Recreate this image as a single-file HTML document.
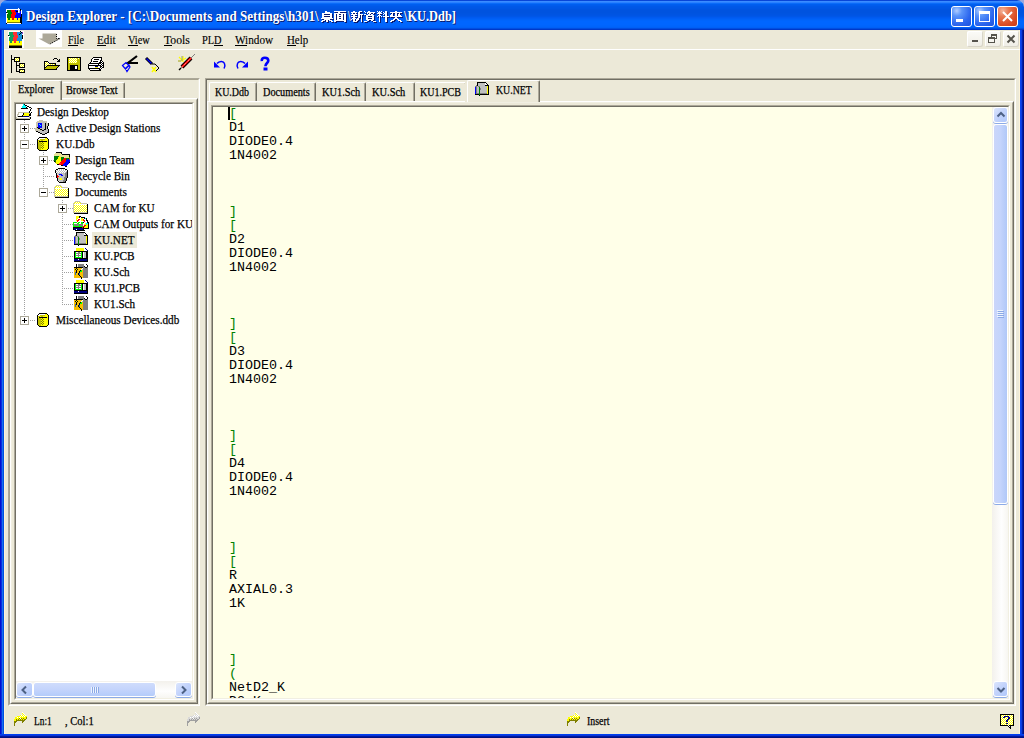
<!DOCTYPE html><html><head><meta charset="utf-8"><style>
*{margin:0;padding:0;box-sizing:border-box}
html,body{width:1024px;height:738px;overflow:hidden;background:#9aa6dc}
body{position:relative;font-family:"Liberation Serif",serif;font-size:12px;color:#000}
.a{position:absolute}
svg.a{overflow:visible}
.t{position:absolute;white-space:nowrap;line-height:14px}
.sunk{position:absolute;border-style:solid;border-width:1px;border-color:#aca899 #fff #fff #aca899}
.sunk>.in{position:absolute;left:0;top:0;right:0;bottom:0;border-style:solid;border-width:1px;border-color:#716f64 #f1efe2 #f1efe2 #716f64}
.rais{position:absolute;border-style:solid;border-width:1px;border-color:#fff #716f64 #716f64 #fff}
.rais>.in{position:absolute;left:0;top:0;right:0;bottom:0;border-style:solid;border-width:1px;border-color:#f1efe2 #aca899 #aca899 #f1efe2}
.code{position:absolute;font-family:"Liberation Mono",monospace;font-size:13.333px;line-height:14px;white-space:pre;color:#000}
.g{color:#008000}
u{text-decoration:none;border-bottom:1px solid #000}
.tab{position:absolute;background:#ece9d8;border-top:1px solid #fff;border-left:1px solid #fff;border-right:1px solid #716f64;box-shadow:inset -1px 0 0 #aca899;border-radius:2px 2px 0 0}
.tt{position:absolute;white-space:nowrap;line-height:12px;font-size:11px;letter-spacing:-0.3px}
.tr{position:absolute;white-space:nowrap;line-height:14px;font-size:12px;letter-spacing:-0.32px}
.sbtn{position:absolute;border:1px solid #fff;border-radius:3px;background:linear-gradient(135deg,#dce6fd 0%,#c4d4fc 45%,#b0c8fb 100%);box-shadow:0 1px 0 #8caae6}
</style></head><body><div class="a" style="left:0;top:0;width:1024px;height:738px;background:#ece9d8;border-radius:7px 7px 0 0"></div><div class="a" style="left:4px;top:30px;width:1px;height:704px;background:#fdf3d8"></div><div class="a" style="left:1019px;top:30px;width:1px;height:704px;background:#fdf3d8"></div><div class="a" style="left:0;top:0;width:1024px;height:30px;background:linear-gradient(to bottom,#0846d8 0px,#0846d8 1px,#3a8cff 1px,#3a8cff 2px,#2a80ff 2px,#2a80ff 3px,#0a6cf8 3px,#0a6cf8 4px,#005ef0 4px,#005ef0 5px,#005cec 5px,#005cec 6px,#0058e8 6px,#0058e8 7px,#0057e6 7px,#0057e6 8px,#0056e4 8px,#0056e4 9px,#0054e0 9px,#0054e0 10px,#0053df 10px,#0053df 11px,#0053df 11px,#0053df 12px,#0053df 12px,#0053df 13px,#0054e0 13px,#0054e0 14px,#0054e2 14px,#0054e2 15px,#0055e4 15px,#0055e4 16px,#0057e8 16px,#0057e8 17px,#005af0 17px,#005af0 18px,#005ef4 18px,#005ef4 19px,#0062f8 19px,#0062f8 20px,#0065fc 20px,#0065fc 21px,#0066ff 21px,#0066ff 22px,#0066ff 22px,#0066ff 23px,#0066ff 23px,#0066ff 24px,#0066ff 24px,#0066ff 25px,#0065fd 25px,#0065fd 26px,#0064fb 26px,#0064fb 27px,#0060f6 27px,#0060f6 28px,#004ee0 28px,#004ee0 29px,#0038c8 29px,#0038c8 30px);border-radius:7px 7px 0 0"></div><div class="a" style="left:0;top:30px;width:4px;height:708px;background:linear-gradient(to right,#0010d0 0px,#0010d0 1px,#0a30e0 1px,#0a30e0 2px,#1670f0 2px,#1670f0 3px,#0050e0 3px,#0050e0 4px)"></div><div class="a" style="left:1020px;top:30px;width:4px;height:708px;background:linear-gradient(to right,#0844f0 0px,#0844f0 1px,#0a3ce0 1px,#0a3ce0 2px,#0020a8 2px,#0020a8 3px,#001080 3px,#001080 4px)"></div><div class="a" style="left:0;top:734px;width:1024px;height:4px;background:linear-gradient(to bottom,#0040f0 0px,#0040f0 1px,#0a34d8 1px,#0a34d8 2px,#0018a0 2px,#0018a0 3px,#001080 3px)"></div><svg class="a" style="left:6px;top:8px;" width="16" height="16" viewBox="0 0 16 16" shape-rendering="crispEdges"><rect x="12" y="0" width="1" height="1" fill="#ffffff"/><rect x="0" y="1" width="14" height="1" fill="#ffffff"/><rect x="14" y="1" width="1" height="1" fill="#000000"/><rect x="0" y="2" width="1" height="1" fill="#ffffff"/><rect x="1" y="2" width="4" height="1" fill="#008000"/><rect x="5" y="2" width="4" height="1" fill="#ff0000"/><rect x="9" y="2" width="3" height="1" fill="#0000ff"/><rect x="12" y="2" width="1" height="1" fill="#ffffff"/><rect x="13" y="2" width="1" height="1" fill="#c0c0c0"/><rect x="14" y="2" width="1" height="1" fill="#000000"/><rect x="15" y="2" width="1" height="1" fill="#ffffff"/><rect x="0" y="3" width="1" height="1" fill="#ffffff"/><rect x="1" y="3" width="4" height="1" fill="#008000"/><rect x="5" y="3" width="4" height="1" fill="#ff0000"/><rect x="9" y="3" width="1" height="1" fill="#0000ff"/><rect x="10" y="3" width="2" height="1" fill="#000000"/><rect x="12" y="3" width="1" height="1" fill="#ffffff"/><rect x="13" y="3" width="1" height="1" fill="#c0c0c0"/><rect x="14" y="3" width="1" height="1" fill="#0000ff"/><rect x="15" y="3" width="1" height="1" fill="#ffffff"/><rect x="0" y="4" width="1" height="1" fill="#000000"/><rect x="1" y="4" width="5" height="1" fill="#008000"/><rect x="6" y="4" width="4" height="1" fill="#ff0000"/><rect x="10" y="4" width="2" height="1" fill="#0000ff"/><rect x="12" y="4" width="1" height="1" fill="#ffffff"/><rect x="13" y="4" width="1" height="1" fill="#c0c0c0"/><rect x="14" y="4" width="1" height="1" fill="#0000ff"/><rect x="15" y="4" width="1" height="1" fill="#ffffff"/><rect x="0" y="5" width="2" height="1" fill="#ffffff"/><rect x="2" y="5" width="4" height="1" fill="#008000"/><rect x="6" y="5" width="4" height="1" fill="#ff0000"/><rect x="10" y="5" width="5" height="1" fill="#0000ff"/><rect x="15" y="5" width="1" height="1" fill="#ffffff"/><rect x="0" y="6" width="1" height="1" fill="#ffffff"/><rect x="1" y="6" width="4" height="1" fill="#008000"/><rect x="5" y="6" width="5" height="1" fill="#ff0000"/><rect x="10" y="6" width="5" height="1" fill="#0000ff"/><rect x="15" y="6" width="1" height="1" fill="#000000"/><rect x="0" y="7" width="1" height="1" fill="#ffffff"/><rect x="1" y="7" width="4" height="1" fill="#008000"/><rect x="5" y="7" width="4" height="1" fill="#ff0000"/><rect x="9" y="7" width="6" height="1" fill="#0000ff"/><rect x="15" y="7" width="1" height="1" fill="#000000"/><rect x="0" y="8" width="1" height="1" fill="#ffffff"/><rect x="1" y="8" width="4" height="1" fill="#008000"/><rect x="5" y="8" width="4" height="1" fill="#ff0000"/><rect x="9" y="8" width="6" height="1" fill="#0000ff"/><rect x="15" y="8" width="1" height="1" fill="#000000"/><rect x="0" y="9" width="1" height="1" fill="#ffffff"/><rect x="1" y="9" width="4" height="1" fill="#008000"/><rect x="5" y="9" width="4" height="1" fill="#ff0000"/><rect x="9" y="9" width="5" height="1" fill="#0000ff"/><rect x="14" y="9" width="2" height="1" fill="#000000"/><rect x="0" y="10" width="1" height="1" fill="#ffffff"/><rect x="1" y="10" width="1" height="1" fill="#ffff00"/><rect x="2" y="10" width="2" height="1" fill="#008000"/><rect x="4" y="10" width="2" height="1" fill="#ffff00"/><rect x="6" y="10" width="2" height="1" fill="#ff0000"/><rect x="8" y="10" width="3" height="1" fill="#ffff00"/><rect x="11" y="10" width="1" height="1" fill="#0000ff"/><rect x="12" y="10" width="2" height="1" fill="#ffff00"/><rect x="14" y="10" width="2" height="1" fill="#000000"/><rect x="0" y="11" width="1" height="1" fill="#ffffff"/><rect x="1" y="11" width="1" height="1" fill="#ffff00"/><rect x="2" y="11" width="2" height="1" fill="#008000"/><rect x="4" y="11" width="2" height="1" fill="#ffff00"/><rect x="6" y="11" width="2" height="1" fill="#ff0000"/><rect x="8" y="11" width="3" height="1" fill="#ffff00"/><rect x="11" y="11" width="1" height="1" fill="#0000ff"/><rect x="12" y="11" width="2" height="1" fill="#ffff00"/><rect x="14" y="11" width="2" height="1" fill="#000000"/><rect x="0" y="12" width="1" height="1" fill="#ffffff"/><rect x="1" y="12" width="13" height="1" fill="#ffff00"/><rect x="14" y="12" width="2" height="1" fill="#000000"/><rect x="0" y="13" width="1" height="1" fill="#ffffff"/><rect x="1" y="13" width="13" height="1" fill="#ffff00"/><rect x="14" y="13" width="2" height="1" fill="#000000"/><rect x="0" y="14" width="1" height="1" fill="#ffffff"/><rect x="1" y="14" width="13" height="1" fill="#808000"/><rect x="14" y="14" width="2" height="1" fill="#000000"/><rect x="0" y="15" width="1" height="1" fill="#000000"/><rect x="1" y="15" width="14" height="1" fill="#ffffff"/><rect x="15" y="15" width="1" height="1" fill="#000000"/></svg><div class="t" style="left:26.00px;top:9px;font-size:14px;line-height:16px;font-weight:bold;color:#fff;transform:scaleX(0.9363);transform-origin:0 0;text-shadow:1px 1px 0 #0a1a70;">Design Explorer - [C:\Documents and Settings\h301\</div><svg class="a" style="left:321px;top:11px" width="13" height="12" shape-rendering="crispEdges"><g fill="#0a1a70"><rect x="5" y="1" width="2" height="1"/><rect x="5" y="2" width="5" height="1"/><rect x="2" y="3" width="10" height="1"/><rect x="2" y="4" width="2" height="1"/><rect x="10" y="4" width="2" height="1"/><rect x="2" y="5" width="10" height="1"/><rect x="2" y="6" width="2" height="1"/><rect x="10" y="6" width="2" height="1"/><rect x="2" y="7" width="10" height="1"/><rect x="1" y="8" width="12" height="1"/><rect x="4" y="9" width="6" height="1"/><rect x="2" y="10" width="3" height="1"/><rect x="6" y="10" width="2" height="1"/><rect x="9" y="10" width="3" height="1"/><rect x="1" y="11" width="2" height="1"/><rect x="6" y="11" width="2" height="1"/><rect x="11" y="11" width="2" height="1"/></g><g fill="#fff"><rect x="4" y="0" width="2" height="1"/><rect x="4" y="1" width="5" height="1"/><rect x="1" y="2" width="10" height="1"/><rect x="1" y="3" width="2" height="1"/><rect x="9" y="3" width="2" height="1"/><rect x="1" y="4" width="10" height="1"/><rect x="1" y="5" width="2" height="1"/><rect x="9" y="5" width="2" height="1"/><rect x="1" y="6" width="10" height="1"/><rect x="0" y="7" width="12" height="1"/><rect x="3" y="8" width="6" height="1"/><rect x="1" y="9" width="3" height="1"/><rect x="5" y="9" width="2" height="1"/><rect x="8" y="9" width="3" height="1"/><rect x="0" y="10" width="2" height="1"/><rect x="5" y="10" width="2" height="1"/><rect x="10" y="10" width="2" height="1"/></g></svg><svg class="a" style="left:334px;top:11px" width="13" height="12" shape-rendering="crispEdges"><g fill="#0a1a70"><rect x="1" y="1" width="12" height="1"/><rect x="5" y="2" width="2" height="1"/><rect x="1" y="3" width="12" height="1"/><rect x="1" y="4" width="2" height="1"/><rect x="4" y="4" width="2" height="1"/><rect x="8" y="4" width="2" height="1"/><rect x="11" y="4" width="2" height="1"/><rect x="1" y="5" width="2" height="1"/><rect x="4" y="5" width="6" height="1"/><rect x="11" y="5" width="2" height="1"/><rect x="1" y="6" width="2" height="1"/><rect x="4" y="6" width="2" height="1"/><rect x="8" y="6" width="2" height="1"/><rect x="11" y="6" width="2" height="1"/><rect x="1" y="7" width="2" height="1"/><rect x="4" y="7" width="6" height="1"/><rect x="11" y="7" width="2" height="1"/><rect x="1" y="8" width="2" height="1"/><rect x="4" y="8" width="2" height="1"/><rect x="8" y="8" width="2" height="1"/><rect x="11" y="8" width="2" height="1"/><rect x="1" y="9" width="2" height="1"/><rect x="4" y="9" width="6" height="1"/><rect x="11" y="9" width="2" height="1"/><rect x="1" y="10" width="12" height="1"/><rect x="1" y="11" width="2" height="1"/><rect x="11" y="11" width="2" height="1"/></g><g fill="#fff"><rect x="0" y="0" width="12" height="1"/><rect x="4" y="1" width="2" height="1"/><rect x="0" y="2" width="12" height="1"/><rect x="0" y="3" width="2" height="1"/><rect x="3" y="3" width="2" height="1"/><rect x="7" y="3" width="2" height="1"/><rect x="10" y="3" width="2" height="1"/><rect x="0" y="4" width="2" height="1"/><rect x="3" y="4" width="6" height="1"/><rect x="10" y="4" width="2" height="1"/><rect x="0" y="5" width="2" height="1"/><rect x="3" y="5" width="2" height="1"/><rect x="7" y="5" width="2" height="1"/><rect x="10" y="5" width="2" height="1"/><rect x="0" y="6" width="2" height="1"/><rect x="3" y="6" width="6" height="1"/><rect x="10" y="6" width="2" height="1"/><rect x="0" y="7" width="2" height="1"/><rect x="3" y="7" width="2" height="1"/><rect x="7" y="7" width="2" height="1"/><rect x="10" y="7" width="2" height="1"/><rect x="0" y="8" width="2" height="1"/><rect x="3" y="8" width="6" height="1"/><rect x="10" y="8" width="2" height="1"/><rect x="0" y="9" width="12" height="1"/><rect x="0" y="10" width="2" height="1"/><rect x="10" y="10" width="2" height="1"/></g></svg><div class="t" style="left:347.67px;top:9px;font-size:14px;line-height:16px;font-weight:bold;color:#fff;transform:scaleX(0.6667);transform-origin:0 0;text-shadow:1px 1px 0 #0a1a70;">\</div><svg class="a" style="left:351px;top:11px" width="13" height="12" shape-rendering="crispEdges"><g fill="#0a1a70"><rect x="3" y="1" width="2" height="1"/><rect x="9" y="1" width="3" height="1"/><rect x="1" y="2" width="6" height="1"/><rect x="8" y="2" width="2" height="1"/><rect x="2" y="3" width="1" height="1"/><rect x="5" y="3" width="1" height="1"/><rect x="8" y="3" width="2" height="1"/><rect x="1" y="4" width="6" height="1"/><rect x="8" y="4" width="5" height="1"/><rect x="3" y="5" width="2" height="1"/><rect x="8" y="5" width="2" height="1"/><rect x="11" y="5" width="1" height="1"/><rect x="1" y="6" width="6" height="1"/><rect x="8" y="6" width="2" height="1"/><rect x="11" y="6" width="1" height="1"/><rect x="3" y="7" width="2" height="1"/><rect x="8" y="7" width="2" height="1"/><rect x="11" y="7" width="1" height="1"/><rect x="2" y="8" width="4" height="1"/><rect x="7" y="8" width="2" height="1"/><rect x="11" y="8" width="1" height="1"/><rect x="1" y="9" width="1" height="1"/><rect x="3" y="9" width="2" height="1"/><rect x="6" y="9" width="3" height="1"/><rect x="11" y="9" width="1" height="1"/><rect x="3" y="10" width="2" height="1"/><rect x="6" y="10" width="2" height="1"/><rect x="11" y="10" width="1" height="1"/><rect x="3" y="11" width="4" height="1"/><rect x="11" y="11" width="1" height="1"/></g><g fill="#fff"><rect x="2" y="0" width="2" height="1"/><rect x="8" y="0" width="3" height="1"/><rect x="0" y="1" width="6" height="1"/><rect x="7" y="1" width="2" height="1"/><rect x="1" y="2" width="1" height="1"/><rect x="4" y="2" width="1" height="1"/><rect x="7" y="2" width="2" height="1"/><rect x="0" y="3" width="6" height="1"/><rect x="7" y="3" width="5" height="1"/><rect x="2" y="4" width="2" height="1"/><rect x="7" y="4" width="2" height="1"/><rect x="10" y="4" width="1" height="1"/><rect x="0" y="5" width="6" height="1"/><rect x="7" y="5" width="2" height="1"/><rect x="10" y="5" width="1" height="1"/><rect x="2" y="6" width="2" height="1"/><rect x="7" y="6" width="2" height="1"/><rect x="10" y="6" width="1" height="1"/><rect x="1" y="7" width="4" height="1"/><rect x="6" y="7" width="2" height="1"/><rect x="10" y="7" width="1" height="1"/><rect x="0" y="8" width="1" height="1"/><rect x="2" y="8" width="2" height="1"/><rect x="5" y="8" width="3" height="1"/><rect x="10" y="8" width="1" height="1"/><rect x="2" y="9" width="2" height="1"/><rect x="5" y="9" width="2" height="1"/><rect x="10" y="9" width="1" height="1"/><rect x="2" y="10" width="4" height="1"/><rect x="10" y="10" width="1" height="1"/></g></svg><svg class="a" style="left:364px;top:11px" width="13" height="12" shape-rendering="crispEdges"><g fill="#0a1a70"><rect x="1" y="1" width="1" height="1"/><rect x="5" y="1" width="2" height="1"/><rect x="2" y="2" width="1" height="1"/><rect x="4" y="2" width="8" height="1"/><rect x="4" y="3" width="1" height="1"/><rect x="6" y="3" width="2" height="1"/><rect x="10" y="3" width="1" height="1"/><rect x="1" y="4" width="2" height="1"/><rect x="5" y="4" width="2" height="1"/><rect x="8" y="4" width="2" height="1"/><rect x="3" y="5" width="8" height="1"/><rect x="3" y="6" width="2" height="1"/><rect x="9" y="6" width="2" height="1"/><rect x="3" y="7" width="8" height="1"/><rect x="3" y="8" width="2" height="1"/><rect x="9" y="8" width="2" height="1"/><rect x="3" y="9" width="8" height="1"/><rect x="4" y="10" width="2" height="1"/><rect x="8" y="10" width="2" height="1"/><rect x="1" y="11" width="3" height="1"/><rect x="10" y="11" width="3" height="1"/></g><g fill="#fff"><rect x="0" y="0" width="1" height="1"/><rect x="4" y="0" width="2" height="1"/><rect x="1" y="1" width="1" height="1"/><rect x="3" y="1" width="8" height="1"/><rect x="3" y="2" width="1" height="1"/><rect x="5" y="2" width="2" height="1"/><rect x="9" y="2" width="1" height="1"/><rect x="0" y="3" width="2" height="1"/><rect x="4" y="3" width="2" height="1"/><rect x="7" y="3" width="2" height="1"/><rect x="2" y="4" width="8" height="1"/><rect x="2" y="5" width="2" height="1"/><rect x="8" y="5" width="2" height="1"/><rect x="2" y="6" width="8" height="1"/><rect x="2" y="7" width="2" height="1"/><rect x="8" y="7" width="2" height="1"/><rect x="2" y="8" width="8" height="1"/><rect x="3" y="9" width="2" height="1"/><rect x="7" y="9" width="2" height="1"/><rect x="0" y="10" width="3" height="1"/><rect x="9" y="10" width="3" height="1"/></g></svg><svg class="a" style="left:377px;top:11px" width="13" height="12" shape-rendering="crispEdges"><g fill="#0a1a70"><rect x="1" y="1" width="1" height="1"/><rect x="3" y="1" width="1" height="1"/><rect x="5" y="1" width="1" height="1"/><rect x="9" y="1" width="2" height="1"/><rect x="2" y="2" width="3" height="1"/><rect x="7" y="2" width="1" height="1"/><rect x="9" y="2" width="2" height="1"/><rect x="1" y="3" width="5" height="1"/><rect x="8" y="3" width="3" height="1"/><rect x="3" y="4" width="1" height="1"/><rect x="7" y="4" width="1" height="1"/><rect x="9" y="4" width="2" height="1"/><rect x="2" y="5" width="3" height="1"/><rect x="9" y="5" width="2" height="1"/><rect x="1" y="6" width="1" height="1"/><rect x="3" y="6" width="1" height="1"/><rect x="5" y="6" width="1" height="1"/><rect x="7" y="6" width="6" height="1"/><rect x="3" y="7" width="1" height="1"/><rect x="9" y="7" width="2" height="1"/><rect x="3" y="8" width="1" height="1"/><rect x="9" y="8" width="2" height="1"/><rect x="3" y="9" width="1" height="1"/><rect x="9" y="9" width="2" height="1"/><rect x="3" y="10" width="1" height="1"/><rect x="9" y="10" width="2" height="1"/><rect x="3" y="11" width="1" height="1"/><rect x="9" y="11" width="2" height="1"/></g><g fill="#fff"><rect x="0" y="0" width="1" height="1"/><rect x="2" y="0" width="1" height="1"/><rect x="4" y="0" width="1" height="1"/><rect x="8" y="0" width="2" height="1"/><rect x="1" y="1" width="3" height="1"/><rect x="6" y="1" width="1" height="1"/><rect x="8" y="1" width="2" height="1"/><rect x="0" y="2" width="5" height="1"/><rect x="7" y="2" width="3" height="1"/><rect x="2" y="3" width="1" height="1"/><rect x="6" y="3" width="1" height="1"/><rect x="8" y="3" width="2" height="1"/><rect x="1" y="4" width="3" height="1"/><rect x="8" y="4" width="2" height="1"/><rect x="0" y="5" width="1" height="1"/><rect x="2" y="5" width="1" height="1"/><rect x="4" y="5" width="1" height="1"/><rect x="6" y="5" width="6" height="1"/><rect x="2" y="6" width="1" height="1"/><rect x="8" y="6" width="2" height="1"/><rect x="2" y="7" width="1" height="1"/><rect x="8" y="7" width="2" height="1"/><rect x="2" y="8" width="1" height="1"/><rect x="8" y="8" width="2" height="1"/><rect x="2" y="9" width="1" height="1"/><rect x="8" y="9" width="2" height="1"/><rect x="2" y="10" width="1" height="1"/><rect x="8" y="10" width="2" height="1"/></g></svg><svg class="a" style="left:390px;top:11px" width="13" height="12" shape-rendering="crispEdges"><g fill="#0a1a70"><rect x="6" y="1" width="2" height="1"/><rect x="1" y="2" width="12" height="1"/><rect x="3" y="3" width="1" height="1"/><rect x="6" y="3" width="2" height="1"/><rect x="10" y="3" width="1" height="1"/><rect x="2" y="4" width="2" height="1"/><rect x="6" y="4" width="2" height="1"/><rect x="9" y="4" width="2" height="1"/><rect x="1" y="5" width="3" height="1"/><rect x="6" y="5" width="2" height="1"/><rect x="9" y="5" width="3" height="1"/><rect x="1" y="6" width="12" height="1"/><rect x="6" y="7" width="2" height="1"/><rect x="5" y="8" width="4" height="1"/><rect x="4" y="9" width="2" height="1"/><rect x="8" y="9" width="2" height="1"/><rect x="2" y="10" width="3" height="1"/><rect x="9" y="10" width="3" height="1"/><rect x="1" y="11" width="2" height="1"/><rect x="11" y="11" width="2" height="1"/></g><g fill="#fff"><rect x="5" y="0" width="2" height="1"/><rect x="0" y="1" width="12" height="1"/><rect x="2" y="2" width="1" height="1"/><rect x="5" y="2" width="2" height="1"/><rect x="9" y="2" width="1" height="1"/><rect x="1" y="3" width="2" height="1"/><rect x="5" y="3" width="2" height="1"/><rect x="8" y="3" width="2" height="1"/><rect x="0" y="4" width="3" height="1"/><rect x="5" y="4" width="2" height="1"/><rect x="8" y="4" width="3" height="1"/><rect x="0" y="5" width="12" height="1"/><rect x="5" y="6" width="2" height="1"/><rect x="4" y="7" width="4" height="1"/><rect x="3" y="8" width="2" height="1"/><rect x="7" y="8" width="2" height="1"/><rect x="1" y="9" width="3" height="1"/><rect x="8" y="9" width="3" height="1"/><rect x="0" y="10" width="2" height="1"/><rect x="10" y="10" width="2" height="1"/></g></svg><div class="t" style="left:403.88px;top:9px;font-size:14px;line-height:16px;font-weight:bold;color:#fff;transform:scaleX(0.8833);transform-origin:0 0;text-shadow:1px 1px 0 #0a1a70;">\KU.Ddb]</div><div class="a" style="left:951px;top:6px;width:21px;height:21px;border:1px solid #fff;border-radius:3px;background:radial-gradient(circle at 25% 20%,#b0ccff 0%,#5a94fa 25%,#2c66ee 65%,#1c52dc 100%)"><div class="a" style="left:4px;top:12px;width:7px;height:3px;background:#fff"></div></div><div class="a" style="left:974px;top:6px;width:21px;height:21px;border:1px solid #fff;border-radius:3px;background:radial-gradient(circle at 25% 20%,#b0ccff 0%,#5a94fa 25%,#2c66ee 65%,#1c52dc 100%)"><div class="a" style="left:4px;top:4px;width:11px;height:11px;border:1px solid #fff;border-top-width:3px"></div></div><div class="a" style="left:997px;top:6px;width:21px;height:21px;border:1px solid #fff;border-radius:3px;background:radial-gradient(circle at 25% 20%,#f4b49c 0%,#e8764e 30%,#d94a22 70%,#c83c14 100%)"><svg class="a" style="left:0;top:0" width="19" height="19"><path d="M5 5L14 14M14 5L5 14" stroke="#fff" stroke-width="2"/></svg></div><div class="a" style="left:4px;top:49px;width:1016px;height:1px;background:#fff"></div><svg class="a" style="left:8px;top:31px;" width="16" height="17" viewBox="0 0 16 17" shape-rendering="crispEdges"><rect x="0" y="0" width="12" height="1" fill="#ffffff"/><rect x="12" y="0" width="1" height="1" fill="#000000"/><rect x="13" y="0" width="3" height="1" fill="#ffffff"/><rect x="0" y="1" width="1" height="1" fill="#ffffff"/><rect x="1" y="1" width="4" height="1" fill="#10a060"/><rect x="5" y="1" width="4" height="1" fill="#ff3030"/><rect x="9" y="1" width="4" height="1" fill="#1890d8"/><rect x="13" y="1" width="1" height="1" fill="#000000"/><rect x="14" y="1" width="1" height="1" fill="#8040c0"/><rect x="15" y="1" width="1" height="1" fill="#ffffff"/><rect x="0" y="2" width="1" height="1" fill="#ffffff"/><rect x="1" y="2" width="4" height="1" fill="#10a060"/><rect x="5" y="2" width="4" height="1" fill="#ff3030"/><rect x="9" y="2" width="3" height="1" fill="#1890d8"/><rect x="12" y="2" width="1" height="1" fill="#000000"/><rect x="13" y="2" width="1" height="1" fill="#1890d8"/><rect x="14" y="2" width="1" height="1" fill="#8040c0"/><rect x="15" y="2" width="1" height="1" fill="#ffffff"/><rect x="0" y="3" width="1" height="1" fill="#ffffff"/><rect x="1" y="3" width="4" height="1" fill="#10a060"/><rect x="5" y="3" width="4" height="1" fill="#ff3030"/><rect x="9" y="3" width="2" height="1" fill="#1890d8"/><rect x="11" y="3" width="1" height="1" fill="#000000"/><rect x="12" y="3" width="2" height="1" fill="#1890d8"/><rect x="14" y="3" width="2" height="1" fill="#ffffff"/><rect x="0" y="4" width="1" height="1" fill="#000000"/><rect x="1" y="4" width="5" height="1" fill="#10a060"/><rect x="6" y="4" width="4" height="1" fill="#ff3030"/><rect x="10" y="4" width="4" height="1" fill="#1890d8"/><rect x="14" y="4" width="1" height="1" fill="#000000"/><rect x="15" y="4" width="1" height="1" fill="#ffffff"/><rect x="0" y="5" width="2" height="1" fill="#ffffff"/><rect x="2" y="5" width="4" height="1" fill="#10a060"/><rect x="6" y="5" width="4" height="1" fill="#ff3030"/><rect x="10" y="5" width="4" height="1" fill="#1890d8"/><rect x="14" y="5" width="1" height="1" fill="#000000"/><rect x="15" y="5" width="1" height="1" fill="#ffffff"/><rect x="0" y="6" width="1" height="1" fill="#ffffff"/><rect x="1" y="6" width="4" height="1" fill="#10a060"/><rect x="5" y="6" width="5" height="1" fill="#ff3030"/><rect x="10" y="6" width="4" height="1" fill="#1890d8"/><rect x="14" y="6" width="1" height="1" fill="#000000"/><rect x="15" y="6" width="1" height="1" fill="#ffffff"/><rect x="0" y="7" width="1" height="1" fill="#ffffff"/><rect x="1" y="7" width="4" height="1" fill="#10a060"/><rect x="5" y="7" width="4" height="1" fill="#ff3030"/><rect x="9" y="7" width="5" height="1" fill="#1890d8"/><rect x="14" y="7" width="1" height="1" fill="#000000"/><rect x="15" y="7" width="1" height="1" fill="#ffffff"/><rect x="0" y="8" width="1" height="1" fill="#ffffff"/><rect x="1" y="8" width="4" height="1" fill="#10a060"/><rect x="5" y="8" width="4" height="1" fill="#ff3030"/><rect x="9" y="8" width="5" height="1" fill="#1890d8"/><rect x="14" y="8" width="2" height="1" fill="#ffffff"/><rect x="0" y="9" width="1" height="1" fill="#ffffff"/><rect x="1" y="9" width="4" height="1" fill="#10a060"/><rect x="5" y="9" width="4" height="1" fill="#ff3030"/><rect x="9" y="9" width="5" height="1" fill="#1890d8"/><rect x="14" y="9" width="2" height="1" fill="#ffffff"/><rect x="0" y="10" width="1" height="1" fill="#ffffff"/><rect x="1" y="10" width="1" height="1" fill="#ffff00"/><rect x="2" y="10" width="2" height="1" fill="#10a060"/><rect x="4" y="10" width="2" height="1" fill="#ffff00"/><rect x="6" y="10" width="2" height="1" fill="#ff3030"/><rect x="8" y="10" width="3" height="1" fill="#ffff00"/><rect x="11" y="10" width="1" height="1" fill="#1890d8"/><rect x="12" y="10" width="2" height="1" fill="#ffff00"/><rect x="14" y="10" width="2" height="1" fill="#ffffff"/><rect x="0" y="11" width="1" height="1" fill="#ffffff"/><rect x="1" y="11" width="1" height="1" fill="#ffff00"/><rect x="2" y="11" width="2" height="1" fill="#10a060"/><rect x="4" y="11" width="2" height="1" fill="#ffff00"/><rect x="6" y="11" width="2" height="1" fill="#ff3030"/><rect x="8" y="11" width="3" height="1" fill="#ffff00"/><rect x="11" y="11" width="1" height="1" fill="#1890d8"/><rect x="12" y="11" width="2" height="1" fill="#ffff00"/><rect x="14" y="11" width="2" height="1" fill="#ffffff"/><rect x="0" y="12" width="1" height="1" fill="#ffffff"/><rect x="1" y="12" width="13" height="1" fill="#ffff00"/><rect x="14" y="12" width="2" height="1" fill="#ffffff"/><rect x="0" y="13" width="1" height="1" fill="#ffffff"/><rect x="1" y="13" width="13" height="1" fill="#ffff00"/><rect x="14" y="13" width="2" height="1" fill="#ffffff"/><rect x="0" y="14" width="1" height="1" fill="#ffffff"/><rect x="1" y="14" width="13" height="1" fill="#808000"/><rect x="14" y="14" width="2" height="1" fill="#ffffff"/><rect x="0" y="15" width="1" height="1" fill="#ffffff"/><rect x="1" y="15" width="13" height="1" fill="#000000"/><rect x="14" y="15" width="2" height="1" fill="#ffffff"/><rect x="0" y="16" width="1" height="1" fill="#ffffff"/><rect x="1" y="16" width="13" height="1" fill="#000000"/><rect x="14" y="16" width="2" height="1" fill="#ffffff"/></svg><div class="a" style="left:36px;top:30px;width:26px;height:17px;background:#fff"></div><svg class="a" style="left:36px;top:30px" width="26" height="17"><path d="M6.5 3.5H20.5V8.5H24.5L13.5 14.5L2.5 8.5H6.5Z" fill="#aca899"/><path d="M20.5 4V8.5L24 8.5L14 14" stroke="#000" stroke-width="1" fill="none" stroke-dasharray="1 1"/></svg><div class="t" style="left:68.00px;top:32px;font-size:13.5px;line-height:16px;font-weight:normal;color:#000;transform:scaleX(0.7619);transform-origin:0 0;-webkit-text-stroke:0.15px #000;">File</div><div class="a" style="left:68px;top:45px;width:10px;height:1px;background:#000"></div><div class="t" style="left:97.00px;top:32px;font-size:13.5px;line-height:16px;font-weight:normal;color:#000;transform:scaleX(0.8261);transform-origin:0 0;-webkit-text-stroke:0.15px #000;">Edit</div><div class="a" style="left:97px;top:45px;width:9px;height:1px;background:#000"></div><div class="t" style="left:128.00px;top:32px;font-size:13.5px;line-height:16px;font-weight:normal;color:#000;transform:scaleX(0.7667);transform-origin:0 0;-webkit-text-stroke:0.15px #000;">View</div><div class="a" style="left:128px;top:45px;width:10px;height:1px;background:#000"></div><div class="t" style="left:164.00px;top:32px;font-size:13.5px;line-height:16px;font-weight:normal;color:#000;transform:scaleX(0.8667);transform-origin:0 0;-webkit-text-stroke:0.15px #000;">Tools</div><div class="a" style="left:164px;top:45px;width:8px;height:1px;background:#000"></div><div class="t" style="left:202.00px;top:32px;font-size:13.5px;line-height:16px;font-weight:normal;color:#000;transform:scaleX(0.7692);transform-origin:0 0;-webkit-text-stroke:0.15px #000;">PLD</div><div class="a" style="left:214px;top:45px;width:9px;height:1px;background:#000"></div><div class="t" style="left:235.00px;top:32px;font-size:13.5px;line-height:16px;font-weight:normal;color:#000;transform:scaleX(0.8298);transform-origin:0 0;-webkit-text-stroke:0.15px #000;">Window</div><div class="a" style="left:235px;top:45px;width:12px;height:1px;background:#000"></div><div class="t" style="left:287.00px;top:32px;font-size:13.5px;line-height:16px;font-weight:normal;color:#000;transform:scaleX(0.8077);transform-origin:0 0;-webkit-text-stroke:0.15px #000;">Help</div><div class="a" style="left:287px;top:45px;width:9px;height:1px;background:#000"></div><div class="a" style="left:967px;top:31px;width:16px;height:16px;background:linear-gradient(#fbfbf8,#efede5);border-radius:2px;box-shadow:inset -1px -1px 0 #d8d5c8,inset 1px 1px 0 #fff"><div class="a" style="left:5px;top:9px;width:6px;height:2px;background:#55534c"></div></div><div class="a" style="left:985px;top:31px;width:16px;height:16px;background:linear-gradient(#fbfbf8,#efede5);border-radius:2px;box-shadow:inset -1px -1px 0 #d8d5c8,inset 1px 1px 0 #fff"><div class="a" style="left:6px;top:3px;width:6px;height:5px;border:1px solid #55534c;border-top-width:2px"></div><div class="a" style="left:3px;top:6px;width:7px;height:6px;background:#f6f5f0;border:1px solid #55534c;border-top-width:2px"></div></div><div class="a" style="left:1003px;top:31px;width:16px;height:16px;background:linear-gradient(#fbfbf8,#efede5);border-radius:2px;box-shadow:inset -1px -1px 0 #d8d5c8,inset 1px 1px 0 #fff"><svg class="a" style="left:0;top:0" width="16" height="16"><path d="M4.5 4.5L11.5 11.5M11.5 4.5L4.5 11.5" stroke="#55534c" stroke-width="2"/></svg></div><svg class="a" style="left:11px;top:55px;" width="14" height="18" viewBox="0 0 14 18" shape-rendering="crispEdges"><rect x="0" y="0" width="1" height="1" fill="#000000"/><rect x="0" y="1" width="1" height="1" fill="#000000"/><rect x="0" y="2" width="1" height="1" fill="#000000"/><rect x="3" y="2" width="6" height="1" fill="#000000"/><rect x="0" y="3" width="1" height="1" fill="#000000"/><rect x="3" y="3" width="1" height="1" fill="#000000"/><rect x="4" y="3" width="1" height="1" fill="#ffffff"/><rect x="5" y="3" width="1" height="1" fill="#ffff00"/><rect x="6" y="3" width="1" height="1" fill="#ffffff"/><rect x="7" y="3" width="1" height="1" fill="#ffff00"/><rect x="8" y="3" width="1" height="1" fill="#000000"/><rect x="0" y="4" width="4" height="1" fill="#000000"/><rect x="4" y="4" width="1" height="1" fill="#ffff00"/><rect x="5" y="4" width="1" height="1" fill="#ffffff"/><rect x="6" y="4" width="1" height="1" fill="#ffff00"/><rect x="7" y="4" width="1" height="1" fill="#ffffff"/><rect x="8" y="4" width="1" height="1" fill="#000000"/><rect x="0" y="5" width="1" height="1" fill="#000000"/><rect x="3" y="5" width="1" height="1" fill="#000000"/><rect x="4" y="5" width="1" height="1" fill="#ffffff"/><rect x="5" y="5" width="1" height="1" fill="#ffff00"/><rect x="6" y="5" width="1" height="1" fill="#ffffff"/><rect x="7" y="5" width="1" height="1" fill="#ffff00"/><rect x="8" y="5" width="1" height="1" fill="#000000"/><rect x="0" y="6" width="1" height="1" fill="#000000"/><rect x="3" y="6" width="6" height="1" fill="#000000"/><rect x="0" y="7" width="1" height="1" fill="#000000"/><rect x="5" y="7" width="1" height="1" fill="#000000"/><rect x="0" y="8" width="1" height="1" fill="#000000"/><rect x="5" y="8" width="1" height="1" fill="#000000"/><rect x="8" y="8" width="6" height="1" fill="#000000"/><rect x="0" y="9" width="1" height="1" fill="#000000"/><rect x="5" y="9" width="1" height="1" fill="#000000"/><rect x="8" y="9" width="1" height="1" fill="#000000"/><rect x="9" y="9" width="1" height="1" fill="#ffff00"/><rect x="10" y="9" width="1" height="1" fill="#ffffff"/><rect x="11" y="9" width="1" height="1" fill="#ffff00"/><rect x="12" y="9" width="1" height="1" fill="#ffffff"/><rect x="13" y="9" width="1" height="1" fill="#000000"/><rect x="0" y="10" width="1" height="1" fill="#000000"/><rect x="5" y="10" width="4" height="1" fill="#000000"/><rect x="9" y="10" width="1" height="1" fill="#ffffff"/><rect x="10" y="10" width="1" height="1" fill="#ffff00"/><rect x="11" y="10" width="1" height="1" fill="#ffffff"/><rect x="12" y="10" width="1" height="1" fill="#ffff00"/><rect x="13" y="10" width="1" height="1" fill="#000000"/><rect x="0" y="11" width="1" height="1" fill="#000000"/><rect x="5" y="11" width="1" height="1" fill="#000000"/><rect x="8" y="11" width="1" height="1" fill="#000000"/><rect x="9" y="11" width="1" height="1" fill="#ffff00"/><rect x="10" y="11" width="1" height="1" fill="#ffffff"/><rect x="11" y="11" width="1" height="1" fill="#ffff00"/><rect x="12" y="11" width="1" height="1" fill="#ffffff"/><rect x="13" y="11" width="1" height="1" fill="#000000"/><rect x="0" y="12" width="1" height="1" fill="#000000"/><rect x="5" y="12" width="1" height="1" fill="#000000"/><rect x="8" y="12" width="6" height="1" fill="#000000"/><rect x="0" y="13" width="1" height="1" fill="#000000"/><rect x="5" y="13" width="1" height="1" fill="#000000"/><rect x="0" y="14" width="1" height="1" fill="#000000"/><rect x="5" y="14" width="1" height="1" fill="#000000"/><rect x="8" y="14" width="6" height="1" fill="#000000"/><rect x="0" y="15" width="1" height="1" fill="#000000"/><rect x="5" y="15" width="1" height="1" fill="#000000"/><rect x="8" y="15" width="1" height="1" fill="#000000"/><rect x="9" y="15" width="1" height="1" fill="#ffff00"/><rect x="10" y="15" width="1" height="1" fill="#ffffff"/><rect x="11" y="15" width="1" height="1" fill="#ffff00"/><rect x="12" y="15" width="1" height="1" fill="#ffffff"/><rect x="13" y="15" width="1" height="1" fill="#000000"/><rect x="0" y="16" width="1" height="1" fill="#000000"/><rect x="5" y="16" width="4" height="1" fill="#000000"/><rect x="9" y="16" width="1" height="1" fill="#ffffff"/><rect x="10" y="16" width="1" height="1" fill="#ffff00"/><rect x="11" y="16" width="1" height="1" fill="#ffffff"/><rect x="12" y="16" width="1" height="1" fill="#ffff00"/><rect x="13" y="16" width="1" height="1" fill="#000000"/><rect x="0" y="17" width="1" height="1" fill="#000000"/><rect x="8" y="17" width="6" height="1" fill="#000000"/></svg><svg class="a" style="left:44px;top:58px;" width="17" height="12" viewBox="0 0 17 12" shape-rendering="crispEdges"><rect x="10" y="0" width="3" height="1" fill="#000000"/><rect x="9" y="1" width="1" height="1" fill="#000000"/><rect x="13" y="1" width="1" height="1" fill="#000000"/><rect x="15" y="1" width="1" height="1" fill="#000000"/><rect x="14" y="2" width="2" height="1" fill="#000000"/><rect x="0" y="3" width="4" height="1" fill="#000000"/><rect x="13" y="3" width="3" height="1" fill="#000000"/><rect x="0" y="4" width="1" height="1" fill="#000000"/><rect x="1" y="4" width="1" height="1" fill="#ffffff"/><rect x="2" y="4" width="1" height="1" fill="#ffff00"/><rect x="3" y="4" width="1" height="1" fill="#ffffff"/><rect x="4" y="4" width="1" height="1" fill="#000000"/><rect x="0" y="5" width="1" height="1" fill="#000000"/><rect x="1" y="5" width="1" height="1" fill="#ffff00"/><rect x="2" y="5" width="1" height="1" fill="#ffffff"/><rect x="3" y="5" width="1" height="1" fill="#ffff00"/><rect x="4" y="5" width="1" height="1" fill="#ffffff"/><rect x="5" y="5" width="7" height="1" fill="#000000"/><rect x="0" y="6" width="1" height="1" fill="#000000"/><rect x="1" y="6" width="1" height="1" fill="#ffffff"/><rect x="2" y="6" width="1" height="1" fill="#ffff00"/><rect x="3" y="6" width="1" height="1" fill="#ffffff"/><rect x="4" y="6" width="1" height="1" fill="#ffff00"/><rect x="5" y="6" width="1" height="1" fill="#ffffff"/><rect x="6" y="6" width="1" height="1" fill="#ffff00"/><rect x="7" y="6" width="1" height="1" fill="#ffffff"/><rect x="8" y="6" width="1" height="1" fill="#ffff00"/><rect x="9" y="6" width="1" height="1" fill="#ffffff"/><rect x="10" y="6" width="1" height="1" fill="#ffff00"/><rect x="11" y="6" width="1" height="1" fill="#000000"/><rect x="0" y="7" width="1" height="1" fill="#000000"/><rect x="1" y="7" width="1" height="1" fill="#ffff00"/><rect x="2" y="7" width="1" height="1" fill="#ffffff"/><rect x="3" y="7" width="13" height="1" fill="#000000"/><rect x="0" y="8" width="1" height="1" fill="#000000"/><rect x="1" y="8" width="1" height="1" fill="#ffffff"/><rect x="2" y="8" width="1" height="1" fill="#000000"/><rect x="3" y="8" width="11" height="1" fill="#c0c000"/><rect x="14" y="8" width="1" height="1" fill="#000000"/><rect x="0" y="9" width="2" height="1" fill="#000000"/><rect x="2" y="9" width="11" height="1" fill="#c0c000"/><rect x="13" y="9" width="1" height="1" fill="#000000"/><rect x="0" y="10" width="1" height="1" fill="#000000"/><rect x="1" y="10" width="11" height="1" fill="#c0c000"/><rect x="12" y="10" width="1" height="1" fill="#000000"/><rect x="0" y="11" width="13" height="1" fill="#000000"/></svg><svg class="a" style="left:67px;top:57px;" width="14" height="14" viewBox="0 0 14 14" shape-rendering="crispEdges"><rect x="0" y="0" width="14" height="1" fill="#000000"/><rect x="0" y="1" width="1" height="1" fill="#000000"/><rect x="1" y="1" width="1" height="1" fill="#c0c000"/><rect x="2" y="1" width="1" height="1" fill="#ffffff"/><rect x="3" y="1" width="1" height="1" fill="#ffff00"/><rect x="4" y="1" width="1" height="1" fill="#ffffff"/><rect x="5" y="1" width="1" height="1" fill="#ffff00"/><rect x="6" y="1" width="1" height="1" fill="#ffffff"/><rect x="7" y="1" width="1" height="1" fill="#ffff00"/><rect x="8" y="1" width="1" height="1" fill="#ffffff"/><rect x="9" y="1" width="1" height="1" fill="#ffff00"/><rect x="10" y="1" width="1" height="1" fill="#c0c000"/><rect x="11" y="1" width="1" height="1" fill="#ffffff"/><rect x="12" y="1" width="1" height="1" fill="#c0c000"/><rect x="13" y="1" width="1" height="1" fill="#000000"/><rect x="0" y="2" width="1" height="1" fill="#000000"/><rect x="1" y="2" width="1" height="1" fill="#c0c000"/><rect x="2" y="2" width="1" height="1" fill="#ffff00"/><rect x="3" y="2" width="1" height="1" fill="#ffffff"/><rect x="4" y="2" width="1" height="1" fill="#ffff00"/><rect x="5" y="2" width="1" height="1" fill="#ffffff"/><rect x="6" y="2" width="1" height="1" fill="#ffff00"/><rect x="7" y="2" width="1" height="1" fill="#ffffff"/><rect x="8" y="2" width="1" height="1" fill="#ffff00"/><rect x="9" y="2" width="1" height="1" fill="#ffffff"/><rect x="10" y="2" width="3" height="1" fill="#c0c000"/><rect x="13" y="2" width="1" height="1" fill="#000000"/><rect x="0" y="3" width="1" height="1" fill="#000000"/><rect x="1" y="3" width="1" height="1" fill="#c0c000"/><rect x="2" y="3" width="1" height="1" fill="#ffffff"/><rect x="3" y="3" width="1" height="1" fill="#ffff00"/><rect x="4" y="3" width="1" height="1" fill="#ffffff"/><rect x="5" y="3" width="1" height="1" fill="#ffff00"/><rect x="6" y="3" width="1" height="1" fill="#ffffff"/><rect x="7" y="3" width="1" height="1" fill="#ffff00"/><rect x="8" y="3" width="1" height="1" fill="#ffffff"/><rect x="9" y="3" width="1" height="1" fill="#ffff00"/><rect x="10" y="3" width="3" height="1" fill="#c0c000"/><rect x="13" y="3" width="1" height="1" fill="#000000"/><rect x="0" y="4" width="1" height="1" fill="#000000"/><rect x="1" y="4" width="1" height="1" fill="#c0c000"/><rect x="2" y="4" width="1" height="1" fill="#ffff00"/><rect x="3" y="4" width="1" height="1" fill="#ffffff"/><rect x="4" y="4" width="1" height="1" fill="#ffff00"/><rect x="5" y="4" width="1" height="1" fill="#ffffff"/><rect x="6" y="4" width="1" height="1" fill="#ffff00"/><rect x="7" y="4" width="1" height="1" fill="#ffffff"/><rect x="8" y="4" width="1" height="1" fill="#ffff00"/><rect x="9" y="4" width="1" height="1" fill="#ffffff"/><rect x="10" y="4" width="3" height="1" fill="#c0c000"/><rect x="13" y="4" width="1" height="1" fill="#000000"/><rect x="0" y="5" width="1" height="1" fill="#000000"/><rect x="1" y="5" width="1" height="1" fill="#c0c000"/><rect x="2" y="5" width="1" height="1" fill="#ffffff"/><rect x="3" y="5" width="1" height="1" fill="#ffff00"/><rect x="4" y="5" width="1" height="1" fill="#ffffff"/><rect x="5" y="5" width="1" height="1" fill="#ffff00"/><rect x="6" y="5" width="1" height="1" fill="#ffffff"/><rect x="7" y="5" width="1" height="1" fill="#ffff00"/><rect x="8" y="5" width="1" height="1" fill="#ffffff"/><rect x="9" y="5" width="1" height="1" fill="#ffff00"/><rect x="10" y="5" width="3" height="1" fill="#c0c000"/><rect x="13" y="5" width="1" height="1" fill="#000000"/><rect x="0" y="6" width="1" height="1" fill="#000000"/><rect x="1" y="6" width="12" height="1" fill="#c0c000"/><rect x="13" y="6" width="1" height="1" fill="#000000"/><rect x="0" y="7" width="1" height="1" fill="#000000"/><rect x="1" y="7" width="12" height="1" fill="#c0c000"/><rect x="13" y="7" width="1" height="1" fill="#000000"/><rect x="0" y="8" width="1" height="1" fill="#000000"/><rect x="1" y="8" width="2" height="1" fill="#c0c000"/><rect x="3" y="8" width="8" height="1" fill="#000000"/><rect x="11" y="8" width="2" height="1" fill="#c0c000"/><rect x="13" y="8" width="1" height="1" fill="#000000"/><rect x="0" y="9" width="1" height="1" fill="#000000"/><rect x="1" y="9" width="2" height="1" fill="#c0c000"/><rect x="3" y="9" width="5" height="1" fill="#000000"/><rect x="8" y="9" width="2" height="1" fill="#ffffff"/><rect x="10" y="9" width="1" height="1" fill="#000000"/><rect x="11" y="9" width="2" height="1" fill="#c0c000"/><rect x="13" y="9" width="1" height="1" fill="#000000"/><rect x="0" y="10" width="1" height="1" fill="#000000"/><rect x="1" y="10" width="2" height="1" fill="#c0c000"/><rect x="3" y="10" width="5" height="1" fill="#000000"/><rect x="8" y="10" width="2" height="1" fill="#ffffff"/><rect x="10" y="10" width="1" height="1" fill="#000000"/><rect x="11" y="10" width="2" height="1" fill="#c0c000"/><rect x="13" y="10" width="1" height="1" fill="#000000"/><rect x="0" y="11" width="1" height="1" fill="#000000"/><rect x="1" y="11" width="2" height="1" fill="#c0c000"/><rect x="3" y="11" width="5" height="1" fill="#000000"/><rect x="8" y="11" width="2" height="1" fill="#ffffff"/><rect x="10" y="11" width="1" height="1" fill="#000000"/><rect x="11" y="11" width="2" height="1" fill="#c0c000"/><rect x="13" y="11" width="1" height="1" fill="#000000"/><rect x="0" y="12" width="1" height="1" fill="#000000"/><rect x="1" y="12" width="2" height="1" fill="#c0c000"/><rect x="3" y="12" width="8" height="1" fill="#000000"/><rect x="11" y="12" width="2" height="1" fill="#c0c000"/><rect x="13" y="12" width="1" height="1" fill="#000000"/><rect x="0" y="13" width="14" height="1" fill="#000000"/></svg><svg class="a" style="left:88px;top:57px;" width="17" height="14" viewBox="0 0 17 14" shape-rendering="crispEdges"><rect x="5" y="0" width="9" height="1" fill="#000000"/><rect x="4" y="1" width="1" height="1" fill="#000000"/><rect x="5" y="1" width="8" height="1" fill="#ffffff"/><rect x="13" y="1" width="1" height="1" fill="#000000"/><rect x="3" y="2" width="1" height="1" fill="#000000"/><rect x="4" y="2" width="2" height="1" fill="#ffffff"/><rect x="6" y="2" width="5" height="1" fill="#000000"/><rect x="11" y="2" width="2" height="1" fill="#ffffff"/><rect x="13" y="2" width="1" height="1" fill="#000000"/><rect x="3" y="3" width="1" height="1" fill="#000000"/><rect x="4" y="3" width="8" height="1" fill="#ffffff"/><rect x="12" y="3" width="2" height="1" fill="#000000"/><rect x="3" y="4" width="1" height="1" fill="#000000"/><rect x="4" y="4" width="1" height="1" fill="#ffffff"/><rect x="5" y="4" width="5" height="1" fill="#000000"/><rect x="10" y="4" width="2" height="1" fill="#ffffff"/><rect x="12" y="4" width="1" height="1" fill="#000000"/><rect x="13" y="4" width="1" height="1" fill="#ffffff"/><rect x="14" y="4" width="1" height="1" fill="#000000"/><rect x="2" y="5" width="1" height="1" fill="#000000"/><rect x="3" y="5" width="8" height="1" fill="#ffffff"/><rect x="11" y="5" width="2" height="1" fill="#000000"/><rect x="13" y="5" width="1" height="1" fill="#000000"/><rect x="14" y="5" width="1" height="1" fill="#ffffff"/><rect x="15" y="5" width="1" height="1" fill="#000000"/><rect x="1" y="6" width="11" height="1" fill="#000000"/><rect x="12" y="6" width="1" height="1" fill="#000000"/><rect x="13" y="6" width="1" height="1" fill="#ffffff"/><rect x="14" y="6" width="1" height="1" fill="#000000"/><rect x="15" y="6" width="1" height="1" fill="#000000"/><rect x="0" y="7" width="1" height="1" fill="#000000"/><rect x="1" y="7" width="9" height="1" fill="#ffffff"/><rect x="10" y="7" width="1" height="1" fill="#000000"/><rect x="11" y="7" width="1" height="1" fill="#ffffff"/><rect x="12" y="7" width="1" height="1" fill="#ffffff"/><rect x="13" y="7" width="1" height="1" fill="#000000"/><rect x="14" y="7" width="1" height="1" fill="#ffffff"/><rect x="15" y="7" width="1" height="1" fill="#000000"/><rect x="0" y="8" width="12" height="1" fill="#000000"/><rect x="12" y="8" width="1" height="1" fill="#000000"/><rect x="13" y="8" width="1" height="1" fill="#ffffff"/><rect x="14" y="8" width="1" height="1" fill="#000000"/><rect x="15" y="8" width="1" height="1" fill="#000000"/><rect x="0" y="9" width="1" height="1" fill="#000000"/><rect x="1" y="9" width="6" height="1" fill="#ffffff"/><rect x="7" y="9" width="3" height="1" fill="#000080"/><rect x="10" y="9" width="2" height="1" fill="#ffffff"/><rect x="12" y="9" width="1" height="1" fill="#000000"/><rect x="13" y="9" width="1" height="1" fill="#000000"/><rect x="14" y="9" width="1" height="1" fill="#ffffff"/><rect x="15" y="9" width="1" height="1" fill="#000000"/><rect x="0" y="10" width="1" height="1" fill="#000000"/><rect x="1" y="10" width="6" height="1" fill="#ffffff"/><rect x="7" y="10" width="3" height="1" fill="#ffff00"/><rect x="10" y="10" width="2" height="1" fill="#ffffff"/><rect x="12" y="10" width="1" height="1" fill="#000000"/><rect x="13" y="10" width="1" height="1" fill="#ffffff"/><rect x="14" y="10" width="1" height="1" fill="#000000"/><rect x="15" y="10" width="1" height="1" fill="#000000"/><rect x="0" y="11" width="12" height="1" fill="#000000"/><rect x="12" y="11" width="1" height="1" fill="#ffffff"/><rect x="13" y="11" width="1" height="1" fill="#000000"/><rect x="14" y="11" width="1" height="1" fill="#ffffff"/><rect x="1" y="12" width="1" height="1" fill="#000000"/><rect x="2" y="12" width="9" height="1" fill="#ffffff"/><rect x="11" y="12" width="1" height="1" fill="#000000"/><rect x="12" y="12" width="1" height="1" fill="#000000"/><rect x="13" y="12" width="1" height="1" fill="#ffffff"/><rect x="2" y="13" width="11" height="1" fill="#000000"/></svg><svg class="a" style="left:116px;top:52px" width="26" height="24"><path d="M21 4L12 11H22" stroke="#000" stroke-width="2.2" fill="none"/><path d="M6.5 13.5L10 10.5L13 13.5L9.5 17Z M9.5 16.5L13 13L14 15L11 19.5Z" stroke="#0000ff" stroke-width="1.2" fill="none"/></svg><svg class="a" style="left:142px;top:52px" width="22" height="24"><path d="M4 6L10 12" stroke="#000" stroke-width="3"/><path d="M4.5 6.5L9.5 11.5" stroke="#0000ff" stroke-width="1.2"/><path d="M10 12H13L17 16L14 19" stroke="#000" stroke-width="1" fill="none"/><path d="M10 15L14 20M14 15L10 20" stroke="#ffff00" stroke-width="1.5"/></svg><svg class="a" style="left:172px;top:52px" width="26" height="24"><path d="M7 18L23 2" stroke="#808080" stroke-width="1"/><path d="M7 18L9 16" stroke="#000" stroke-width="1.5"/><path d="M10 15L19 6" stroke="#000" stroke-width="4"/><path d="M10 15L19 6" stroke="#ff0000" stroke-width="2.2"/><path d="M10.5 14.5L18.5 6.5" stroke="#fff" stroke-width="0.8" stroke-dasharray="1 1"/><path d="M7 5L10 8M11 4L11 10M14 6L9 9M6 9H10" stroke="#ffff00" stroke-width="1.2"/><path d="M10 4V9M6 9H9" stroke="#808080" stroke-width="0.8"/></svg><svg class="a" style="left:212px;top:58px" width="16" height="12"><path d="M5 5.5C7 3 11.5 2.5 12.5 5.5C13.5 8 12.5 9.5 12 10.5" stroke="#0000ff" stroke-width="1.5" fill="none"/><path d="M2 3.5V9.5H8Z" fill="#0000ff"/></svg><svg class="a" style="left:234px;top:58px" width="16" height="12"><path d="M11 5.5C9 3 4.5 2.5 3.5 5.5C2.5 8 3.5 9.5 4 10.5" stroke="#0000ff" stroke-width="1.5" fill="none"/><path d="M14 3.5V9.5H8Z" fill="#0000ff"/></svg><svg class="a" style="left:258px;top:56px" width="14" height="16"><path d="M3.8 5.2C3.5 2.5 5 1.8 6.8 1.8C8.8 1.8 10.3 2.8 10.3 4.8C10.3 6.8 7.8 7.2 7.5 9.8V10.3" stroke="#0000ff" stroke-width="2.6" fill="none"/><rect x="5.5" y="11.5" width="4" height="3" fill="#0000ff"/></svg><div class="sunk" style="left:8px;top:78px;width:192px;height:628px;"><div class="in" style="border-color:#a7a390 #f1efe2 #f1efe2 #a7a390"></div></div><div class="rais" style="left:10px;top:98px;width:188px;height:606px;"><div class="in"></div></div><div class="tab" style="left:10px;top:80px;width:52px;height:20px;"></div><div class="t" style="left:18.00px;top:81px;font-size:12px;line-height:16px;font-weight:normal;color:#000;-webkit-text-stroke:0.25px #000;transform:scaleX(0.8571);transform-origin:0 0;">Explorer</div><div class="tab" style="left:62px;top:82px;width:63px;height:16px;border-left:none"></div><div class="t" style="left:66.00px;top:82px;font-size:12px;line-height:16px;font-weight:normal;color:#000;-webkit-text-stroke:0.25px #000;transform:scaleX(0.8525);transform-origin:0 0;">Browse Text</div><div class="sunk" style="left:14px;top:102px;width:180px;height:598px;"><div class="in"></div></div><div class="a" style="left:16px;top:104px;width:176px;height:577px;background:#fff;overflow:hidden"><div class="a" style="left:8px;top:16px;width:1px;height:201px;background-image:linear-gradient(#a0a0a0 50%,transparent 50%);background-size:1px 2px"></div><div class="a" style="left:27px;top:48px;width:1px;height:41px;background-image:linear-gradient(#a0a0a0 50%,transparent 50%);background-size:1px 2px"></div><div class="a" style="left:46px;top:96px;width:1px;height:105px;background-image:linear-gradient(#a0a0a0 50%,transparent 50%);background-size:1px 2px"></div><svg class="a" style="left:0px;top:0px;" width="16" height="16" viewBox="0 0 16 16" shape-rendering="crispEdges"><rect x="7" y="0" width="1" height="1" fill="#00ffff"/><rect x="8" y="0" width="1" height="1" fill="#000000"/><rect x="7" y="1" width="2" height="1" fill="#00ffff"/><rect x="9" y="1" width="2" height="1" fill="#000000"/><rect x="6" y="2" width="4" height="1" fill="#00ffff"/><rect x="10" y="2" width="1" height="1" fill="#ffffff"/><rect x="11" y="2" width="2" height="1" fill="#000000"/><rect x="6" y="3" width="4" height="1" fill="#00ffff"/><rect x="10" y="3" width="1" height="1" fill="#000000"/><rect x="13" y="3" width="2" height="1" fill="#000000"/><rect x="5" y="4" width="7" height="1" fill="#000000"/><rect x="15" y="4" width="1" height="1" fill="#000000"/><rect x="14" y="5" width="1" height="1" fill="#000000"/><rect x="14" y="6" width="1" height="1" fill="#000000"/><rect x="13" y="7" width="1" height="1" fill="#000000"/><rect x="2" y="8" width="11" height="1" fill="#c8c4b0"/><rect x="13" y="8" width="1" height="1" fill="#000000"/><rect x="15" y="8" width="1" height="1" fill="#000000"/><rect x="2" y="9" width="1" height="1" fill="#c8c4b0"/><rect x="3" y="9" width="4" height="1" fill="#ffffff"/><rect x="7" y="9" width="1" height="1" fill="#000000"/><rect x="8" y="9" width="5" height="1" fill="#ffff00"/><rect x="13" y="9" width="1" height="1" fill="#c8c4b0"/><rect x="14" y="9" width="1" height="1" fill="#000000"/><rect x="1" y="10" width="2" height="1" fill="#c8c4b0"/><rect x="3" y="10" width="4" height="1" fill="#ffffff"/><rect x="7" y="10" width="1" height="1" fill="#000000"/><rect x="8" y="10" width="5" height="1" fill="#ffff00"/><rect x="13" y="10" width="2" height="1" fill="#000000"/><rect x="1" y="11" width="1" height="1" fill="#c8c4b0"/><rect x="2" y="11" width="4" height="1" fill="#ffffff"/><rect x="6" y="11" width="1" height="1" fill="#000000"/><rect x="7" y="11" width="6" height="1" fill="#ffff00"/><rect x="13" y="11" width="2" height="1" fill="#000000"/><rect x="1" y="12" width="1" height="1" fill="#c8c4b0"/><rect x="2" y="12" width="5" height="1" fill="#000000"/><rect x="7" y="12" width="6" height="1" fill="#000080"/><rect x="13" y="12" width="1" height="1" fill="#c8c4b0"/><rect x="0" y="13" width="1" height="1" fill="#c8c4b0"/><rect x="1" y="13" width="12" height="1" fill="#ffffff"/><rect x="13" y="13" width="1" height="1" fill="#c8c4b0"/><rect x="14" y="13" width="1" height="1" fill="#000000"/><rect x="0" y="14" width="14" height="1" fill="#c8c4b0"/><rect x="14" y="14" width="1" height="1" fill="#000000"/><rect x="0" y="15" width="14" height="1" fill="#000000"/></svg><div class="t" style="left:21.00px;top:0px;font-size:13.5px;line-height:16px;font-weight:normal;color:#000;-webkit-text-stroke:0.25px #000;transform:scaleX(0.8293);transform-origin:0 0;">Design Desktop</div><div class="a" style="left:8px;top:24px;width:11px;height:1px;background-image:linear-gradient(to right,#a0a0a0 50%,transparent 50%);background-size:2px 1px"></div><div class="a" style="left:4px;top:20px;width:9px;height:9px;background:#fff;border:1px solid #aca899"></div><div class="a" style="left:6px;top:24px;width:5px;height:1px;background:#000"></div><div class="a" style="left:8px;top:22px;width:1px;height:5px;background:#000"></div><svg class="a" style="left:19px;top:16px;" width="16" height="16" viewBox="0 0 16 16" shape-rendering="crispEdges"><rect x="4" y="0" width="4" height="1" fill="#c8c4b0"/><rect x="2" y="1" width="10" height="1" fill="#c8c4b0"/><rect x="1" y="2" width="2" height="1" fill="#c8c4b0"/><rect x="3" y="2" width="7" height="1" fill="#c0c0c0"/><rect x="10" y="2" width="2" height="1" fill="#c8c4b0"/><rect x="1" y="3" width="2" height="1" fill="#c8c4b0"/><rect x="3" y="3" width="4" height="1" fill="#0000ff"/><rect x="7" y="3" width="3" height="1" fill="#c0c0c0"/><rect x="10" y="3" width="1" height="1" fill="#000000"/><rect x="11" y="3" width="2" height="1" fill="#c8c4b0"/><rect x="13" y="3" width="1" height="1" fill="#000000"/><rect x="1" y="4" width="2" height="1" fill="#c8c4b0"/><rect x="3" y="4" width="1" height="1" fill="#0000ff"/><rect x="4" y="4" width="1" height="1" fill="#00ffff"/><rect x="5" y="4" width="2" height="1" fill="#0000ff"/><rect x="7" y="4" width="3" height="1" fill="#c0c0c0"/><rect x="10" y="4" width="1" height="1" fill="#000000"/><rect x="11" y="4" width="2" height="1" fill="#c8c4b0"/><rect x="13" y="4" width="1" height="1" fill="#000000"/><rect x="1" y="5" width="2" height="1" fill="#c8c4b0"/><rect x="3" y="5" width="2" height="1" fill="#0000ff"/><rect x="5" y="5" width="1" height="1" fill="#00ffff"/><rect x="6" y="5" width="1" height="1" fill="#0000ff"/><rect x="7" y="5" width="3" height="1" fill="#c0c0c0"/><rect x="10" y="5" width="1" height="1" fill="#000000"/><rect x="11" y="5" width="2" height="1" fill="#c8c4b0"/><rect x="13" y="5" width="1" height="1" fill="#000000"/><rect x="1" y="6" width="2" height="1" fill="#c8c4b0"/><rect x="3" y="6" width="4" height="1" fill="#0000ff"/><rect x="7" y="6" width="3" height="1" fill="#c0c0c0"/><rect x="10" y="6" width="1" height="1" fill="#000000"/><rect x="11" y="6" width="1" height="1" fill="#c8c4b0"/><rect x="12" y="6" width="1" height="1" fill="#000000"/><rect x="1" y="7" width="1" height="1" fill="#c8c4b0"/><rect x="2" y="7" width="1" height="1" fill="#000000"/><rect x="3" y="7" width="4" height="1" fill="#0000ff"/><rect x="7" y="7" width="3" height="1" fill="#c0c0c0"/><rect x="10" y="7" width="1" height="1" fill="#000000"/><rect x="11" y="7" width="1" height="1" fill="#c8c4b0"/><rect x="12" y="7" width="1" height="1" fill="#000000"/><rect x="0" y="8" width="3" height="1" fill="#c8c4b0"/><rect x="3" y="8" width="2" height="1" fill="#000000"/><rect x="5" y="8" width="5" height="1" fill="#c0c0c0"/><rect x="10" y="8" width="1" height="1" fill="#000000"/><rect x="11" y="8" width="1" height="1" fill="#c0c0c0"/><rect x="12" y="8" width="1" height="1" fill="#000000"/><rect x="0" y="9" width="5" height="1" fill="#c8c4b0"/><rect x="5" y="9" width="2" height="1" fill="#000000"/><rect x="7" y="9" width="2" height="1" fill="#c0c0c0"/><rect x="9" y="9" width="2" height="1" fill="#000000"/><rect x="11" y="9" width="2" height="1" fill="#c0c0c0"/><rect x="13" y="9" width="1" height="1" fill="#000000"/><rect x="0" y="10" width="7" height="1" fill="#c8c4b0"/><rect x="7" y="10" width="2" height="1" fill="#000000"/><rect x="9" y="10" width="4" height="1" fill="#c0c0c0"/><rect x="13" y="10" width="1" height="1" fill="#000000"/><rect x="1" y="11" width="2" height="1" fill="#000000"/><rect x="3" y="11" width="10" height="1" fill="#c0c0c0"/><rect x="13" y="11" width="1" height="1" fill="#000000"/><rect x="3" y="12" width="2" height="1" fill="#000000"/><rect x="5" y="12" width="7" height="1" fill="#c0c0c0"/><rect x="12" y="12" width="2" height="1" fill="#000000"/><rect x="5" y="13" width="2" height="1" fill="#000000"/><rect x="7" y="13" width="3" height="1" fill="#c0c0c0"/><rect x="10" y="13" width="2" height="1" fill="#000000"/><rect x="7" y="14" width="3" height="1" fill="#000000"/></svg><div class="t" style="left:40.00px;top:16px;font-size:13.5px;line-height:16px;font-weight:normal;color:#000;-webkit-text-stroke:0.25px #000;transform:scaleX(0.8388);transform-origin:0 0;">Active Design Stations</div><div class="a" style="left:8px;top:40px;width:11px;height:1px;background-image:linear-gradient(to right,#a0a0a0 50%,transparent 50%);background-size:2px 1px"></div><div class="a" style="left:4px;top:36px;width:9px;height:9px;background:#fff;border:1px solid #aca899"></div><div class="a" style="left:6px;top:40px;width:5px;height:1px;background:#000"></div><svg class="a" style="left:19px;top:32px;" width="16" height="16" viewBox="0 0 16 16" shape-rendering="crispEdges"><rect x="4" y="1" width="8" height="1" fill="#000000"/><rect x="3" y="2" width="1" height="1" fill="#000000"/><rect x="4" y="2" width="6" height="1" fill="#ffffff"/><rect x="10" y="2" width="2" height="1" fill="#ffff00"/><rect x="12" y="2" width="1" height="1" fill="#000000"/><rect x="2" y="3" width="1" height="1" fill="#000000"/><rect x="3" y="3" width="2" height="1" fill="#ffffff"/><rect x="5" y="3" width="5" height="1" fill="#c0c000"/><rect x="10" y="3" width="3" height="1" fill="#ffff00"/><rect x="13" y="3" width="1" height="1" fill="#000000"/><rect x="2" y="4" width="1" height="1" fill="#000000"/><rect x="3" y="4" width="2" height="1" fill="#c0c000"/><rect x="5" y="4" width="1" height="1" fill="#ffff00"/><rect x="6" y="4" width="2" height="1" fill="#c0c000"/><rect x="8" y="4" width="5" height="1" fill="#ffff00"/><rect x="13" y="4" width="1" height="1" fill="#000000"/><rect x="2" y="5" width="1" height="1" fill="#000000"/><rect x="3" y="5" width="1" height="1" fill="#ffff00"/><rect x="4" y="5" width="8" height="1" fill="#000000"/><rect x="12" y="5" width="1" height="1" fill="#ffff00"/><rect x="13" y="5" width="1" height="1" fill="#000000"/><rect x="2" y="6" width="1" height="1" fill="#000000"/><rect x="3" y="6" width="3" height="1" fill="#c0c000"/><rect x="6" y="6" width="1" height="1" fill="#ffff00"/><rect x="7" y="6" width="1" height="1" fill="#808000"/><rect x="8" y="6" width="5" height="1" fill="#ffff00"/><rect x="13" y="6" width="1" height="1" fill="#000000"/><rect x="2" y="7" width="1" height="1" fill="#000000"/><rect x="3" y="7" width="3" height="1" fill="#c0c000"/><rect x="6" y="7" width="1" height="1" fill="#808000"/><rect x="7" y="7" width="1" height="1" fill="#ffff00"/><rect x="8" y="7" width="1" height="1" fill="#808000"/><rect x="9" y="7" width="4" height="1" fill="#ffff00"/><rect x="13" y="7" width="1" height="1" fill="#000000"/><rect x="2" y="8" width="1" height="1" fill="#000000"/><rect x="3" y="8" width="3" height="1" fill="#c0c000"/><rect x="6" y="8" width="1" height="1" fill="#ffff00"/><rect x="7" y="8" width="1" height="1" fill="#808000"/><rect x="8" y="8" width="5" height="1" fill="#ffff00"/><rect x="13" y="8" width="1" height="1" fill="#000000"/><rect x="2" y="9" width="1" height="1" fill="#000000"/><rect x="3" y="9" width="3" height="1" fill="#c0c000"/><rect x="6" y="9" width="1" height="1" fill="#808000"/><rect x="7" y="9" width="1" height="1" fill="#ffff00"/><rect x="8" y="9" width="1" height="1" fill="#808000"/><rect x="9" y="9" width="4" height="1" fill="#ffff00"/><rect x="13" y="9" width="1" height="1" fill="#000000"/><rect x="2" y="10" width="1" height="1" fill="#000000"/><rect x="3" y="10" width="3" height="1" fill="#c0c000"/><rect x="6" y="10" width="1" height="1" fill="#ffff00"/><rect x="7" y="10" width="1" height="1" fill="#808000"/><rect x="8" y="10" width="5" height="1" fill="#ffff00"/><rect x="13" y="10" width="1" height="1" fill="#000000"/><rect x="2" y="11" width="1" height="1" fill="#000000"/><rect x="3" y="11" width="3" height="1" fill="#c0c000"/><rect x="6" y="11" width="1" height="1" fill="#808000"/><rect x="7" y="11" width="1" height="1" fill="#ffff00"/><rect x="8" y="11" width="1" height="1" fill="#808000"/><rect x="9" y="11" width="4" height="1" fill="#ffff00"/><rect x="13" y="11" width="1" height="1" fill="#000000"/><rect x="2" y="12" width="1" height="1" fill="#000000"/><rect x="3" y="12" width="3" height="1" fill="#c0c000"/><rect x="6" y="12" width="1" height="1" fill="#ffff00"/><rect x="7" y="12" width="1" height="1" fill="#808000"/><rect x="8" y="12" width="5" height="1" fill="#ffff00"/><rect x="13" y="12" width="1" height="1" fill="#000000"/><rect x="3" y="13" width="1" height="1" fill="#000000"/><rect x="4" y="13" width="2" height="1" fill="#c0c000"/><rect x="6" y="13" width="6" height="1" fill="#ffff00"/><rect x="12" y="13" width="1" height="1" fill="#000000"/><rect x="4" y="14" width="8" height="1" fill="#000000"/></svg><div class="t" style="left:40.00px;top:32px;font-size:13.5px;line-height:16px;font-weight:normal;color:#000;-webkit-text-stroke:0.25px #000;transform:scaleX(0.8352);transform-origin:0 0;">KU.Ddb</div><div class="a" style="left:27px;top:56px;width:11px;height:1px;background-image:linear-gradient(to right,#a0a0a0 50%,transparent 50%);background-size:2px 1px"></div><div class="a" style="left:23px;top:52px;width:9px;height:9px;background:#fff;border:1px solid #aca899"></div><div class="a" style="left:25px;top:56px;width:5px;height:1px;background:#000"></div><div class="a" style="left:27px;top:54px;width:1px;height:5px;background:#000"></div><svg class="a" style="left:38px;top:48px;" width="16" height="16" viewBox="0 0 16 16" shape-rendering="crispEdges"><rect x="2" y="0" width="6" height="1" fill="#000000"/><rect x="1" y="1" width="6" height="1" fill="#e8e498"/><rect x="7" y="1" width="1" height="1" fill="#000000"/><rect x="0" y="2" width="8" height="1" fill="#e8e498"/><rect x="8" y="2" width="8" height="1" fill="#000000"/><rect x="0" y="3" width="15" height="1" fill="#e8e498"/><rect x="15" y="3" width="1" height="1" fill="#000000"/><rect x="0" y="4" width="5" height="1" fill="#008000"/><rect x="5" y="4" width="1" height="1" fill="#ffff00"/><rect x="6" y="4" width="9" height="1" fill="#e8e498"/><rect x="15" y="4" width="1" height="1" fill="#000000"/><rect x="0" y="5" width="4" height="1" fill="#008000"/><rect x="4" y="5" width="3" height="1" fill="#ffff00"/><rect x="7" y="5" width="3" height="1" fill="#008000"/><rect x="10" y="5" width="5" height="1" fill="#e8e498"/><rect x="15" y="5" width="1" height="1" fill="#808000"/><rect x="0" y="6" width="4" height="1" fill="#008000"/><rect x="4" y="6" width="3" height="1" fill="#ffff00"/><rect x="7" y="6" width="3" height="1" fill="#008000"/><rect x="10" y="6" width="2" height="1" fill="#ff0000"/><rect x="12" y="6" width="3" height="1" fill="#008000"/><rect x="15" y="6" width="1" height="1" fill="#808000"/><rect x="0" y="7" width="3" height="1" fill="#008000"/><rect x="3" y="7" width="4" height="1" fill="#ffff00"/><rect x="7" y="7" width="2" height="1" fill="#008000"/><rect x="9" y="7" width="3" height="1" fill="#ff0000"/><rect x="12" y="7" width="1" height="1" fill="#008000"/><rect x="13" y="7" width="2" height="1" fill="#0000ff"/><rect x="15" y="7" width="1" height="1" fill="#808000"/><rect x="0" y="8" width="2" height="1" fill="#008000"/><rect x="2" y="8" width="5" height="1" fill="#ffff00"/><rect x="7" y="8" width="1" height="1" fill="#008000"/><rect x="8" y="8" width="4" height="1" fill="#ff0000"/><rect x="12" y="8" width="4" height="1" fill="#0000ff"/><rect x="0" y="9" width="1" height="1" fill="#000000"/><rect x="1" y="9" width="1" height="1" fill="#008000"/><rect x="2" y="9" width="5" height="1" fill="#ffff00"/><rect x="7" y="9" width="5" height="1" fill="#ff0000"/><rect x="12" y="9" width="4" height="1" fill="#0000ff"/><rect x="1" y="10" width="1" height="1" fill="#808000"/><rect x="2" y="10" width="4" height="1" fill="#ffff00"/><rect x="6" y="10" width="5" height="1" fill="#ff0000"/><rect x="11" y="10" width="4" height="1" fill="#0000ff"/><rect x="15" y="10" width="1" height="1" fill="#000000"/><rect x="2" y="11" width="3" height="1" fill="#ffff00"/><rect x="5" y="11" width="2" height="1" fill="#ff3030"/><rect x="7" y="11" width="3" height="1" fill="#ff0000"/><rect x="10" y="11" width="5" height="1" fill="#0000ff"/><rect x="3" y="12" width="2" height="1" fill="#000000"/><rect x="5" y="12" width="4" height="1" fill="#ff0000"/><rect x="9" y="12" width="5" height="1" fill="#0000ff"/><rect x="7" y="13" width="2" height="1" fill="#000000"/><rect x="9" y="13" width="4" height="1" fill="#0000ff"/><rect x="11" y="14" width="2" height="1" fill="#000000"/></svg><div class="t" style="left:59.00px;top:48px;font-size:13.5px;line-height:16px;font-weight:normal;color:#000;-webkit-text-stroke:0.25px #000;transform:scaleX(0.8329);transform-origin:0 0;">Design Team</div><div class="a" style="left:27px;top:72px;width:11px;height:1px;background-image:linear-gradient(to right,#a0a0a0 50%,transparent 50%);background-size:2px 1px"></div><svg class="a" style="left:38px;top:64px;" width="16" height="16" viewBox="0 0 16 16" shape-rendering="crispEdges"><rect x="4" y="0" width="7" height="1" fill="#000000"/><rect x="2" y="1" width="2" height="1" fill="#000000"/><rect x="4" y="1" width="1" height="1" fill="#ffffff"/><rect x="5" y="1" width="1" height="1" fill="#c0c0c0"/><rect x="6" y="1" width="1" height="1" fill="#ffffff"/><rect x="7" y="1" width="1" height="1" fill="#c0c0c0"/><rect x="8" y="1" width="1" height="1" fill="#ffffff"/><rect x="9" y="1" width="1" height="1" fill="#c0c0c0"/><rect x="10" y="1" width="1" height="1" fill="#ffffff"/><rect x="11" y="1" width="2" height="1" fill="#000000"/><rect x="1" y="2" width="1" height="1" fill="#000000"/><rect x="2" y="2" width="1" height="1" fill="#ffffff"/><rect x="3" y="2" width="1" height="1" fill="#c0c0c0"/><rect x="4" y="2" width="1" height="1" fill="#ffffff"/><rect x="5" y="2" width="1" height="1" fill="#c0c0c0"/><rect x="6" y="2" width="1" height="1" fill="#ffffff"/><rect x="7" y="2" width="1" height="1" fill="#c0c0c0"/><rect x="8" y="2" width="1" height="1" fill="#ffffff"/><rect x="9" y="2" width="1" height="1" fill="#c0c0c0"/><rect x="10" y="2" width="1" height="1" fill="#ffffff"/><rect x="11" y="2" width="1" height="1" fill="#c0c0c0"/><rect x="12" y="2" width="1" height="1" fill="#ffffff"/><rect x="13" y="2" width="1" height="1" fill="#000000"/><rect x="1" y="3" width="1" height="1" fill="#000000"/><rect x="2" y="3" width="1" height="1" fill="#c0c0c0"/><rect x="3" y="3" width="1" height="1" fill="#ffffff"/><rect x="4" y="3" width="1" height="1" fill="#c0c0c0"/><rect x="5" y="3" width="1" height="1" fill="#ffffff"/><rect x="6" y="3" width="1" height="1" fill="#c0c0c0"/><rect x="7" y="3" width="1" height="1" fill="#ffffff"/><rect x="8" y="3" width="1" height="1" fill="#c0c0c0"/><rect x="9" y="3" width="1" height="1" fill="#ffffff"/><rect x="10" y="3" width="1" height="1" fill="#c0c0c0"/><rect x="11" y="3" width="1" height="1" fill="#ffffff"/><rect x="12" y="3" width="1" height="1" fill="#c0c0c0"/><rect x="13" y="3" width="1" height="1" fill="#000000"/><rect x="1" y="4" width="1" height="1" fill="#000000"/><rect x="2" y="4" width="1" height="1" fill="#ffffff"/><rect x="3" y="4" width="1" height="1" fill="#c0c0c0"/><rect x="4" y="4" width="1" height="1" fill="#ffffff"/><rect x="5" y="4" width="1" height="1" fill="#c0c0c0"/><rect x="6" y="4" width="1" height="1" fill="#ffffff"/><rect x="7" y="4" width="1" height="1" fill="#c0c0c0"/><rect x="8" y="4" width="1" height="1" fill="#ffffff"/><rect x="9" y="4" width="1" height="1" fill="#c0c0c0"/><rect x="10" y="4" width="1" height="1" fill="#ffffff"/><rect x="11" y="4" width="1" height="1" fill="#c0c0c0"/><rect x="12" y="4" width="1" height="1" fill="#808080"/><rect x="13" y="4" width="1" height="1" fill="#000000"/><rect x="2" y="5" width="1" height="1" fill="#000000"/><rect x="3" y="5" width="1" height="1" fill="#d8d8d8"/><rect x="4" y="5" width="7" height="1" fill="#c0c0c0"/><rect x="11" y="5" width="2" height="1" fill="#808080"/><rect x="13" y="5" width="1" height="1" fill="#000000"/><rect x="2" y="6" width="1" height="1" fill="#000000"/><rect x="3" y="6" width="1" height="1" fill="#d8d8d8"/><rect x="4" y="6" width="1" height="1" fill="#c0c0c0"/><rect x="5" y="6" width="3" height="1" fill="#0000ff"/><rect x="8" y="6" width="3" height="1" fill="#c0c0c0"/><rect x="11" y="6" width="2" height="1" fill="#808080"/><rect x="13" y="6" width="1" height="1" fill="#000000"/><rect x="2" y="7" width="1" height="1" fill="#000000"/><rect x="3" y="7" width="1" height="1" fill="#ff0000"/><rect x="4" y="7" width="1" height="1" fill="#d8d8d8"/><rect x="5" y="7" width="2" height="1" fill="#c0c0c0"/><rect x="7" y="7" width="2" height="1" fill="#0000ff"/><rect x="9" y="7" width="2" height="1" fill="#c0c0c0"/><rect x="11" y="7" width="2" height="1" fill="#808080"/><rect x="13" y="7" width="1" height="1" fill="#000000"/><rect x="2" y="8" width="1" height="1" fill="#000000"/><rect x="3" y="8" width="2" height="1" fill="#ff0000"/><rect x="5" y="8" width="6" height="1" fill="#c0c0c0"/><rect x="11" y="8" width="2" height="1" fill="#808080"/><rect x="13" y="8" width="1" height="1" fill="#000000"/><rect x="2" y="9" width="1" height="1" fill="#000000"/><rect x="3" y="9" width="1" height="1" fill="#ff0000"/><rect x="4" y="9" width="6" height="1" fill="#c0c0c0"/><rect x="10" y="9" width="3" height="1" fill="#808080"/><rect x="13" y="9" width="1" height="1" fill="#000000"/><rect x="3" y="10" width="1" height="1" fill="#000000"/><rect x="4" y="10" width="1" height="1" fill="#c0c0c0"/><rect x="5" y="10" width="3" height="1" fill="#ffff00"/><rect x="8" y="10" width="2" height="1" fill="#c0c0c0"/><rect x="10" y="10" width="2" height="1" fill="#808080"/><rect x="12" y="10" width="1" height="1" fill="#000000"/><rect x="3" y="11" width="1" height="1" fill="#000000"/><rect x="4" y="11" width="2" height="1" fill="#c0c0c0"/><rect x="6" y="11" width="2" height="1" fill="#ffff00"/><rect x="8" y="11" width="2" height="1" fill="#c0c0c0"/><rect x="10" y="11" width="2" height="1" fill="#808080"/><rect x="12" y="11" width="1" height="1" fill="#000000"/><rect x="3" y="12" width="1" height="1" fill="#000000"/><rect x="4" y="12" width="1" height="1" fill="#d8d8d8"/><rect x="5" y="12" width="4" height="1" fill="#c0c0c0"/><rect x="9" y="12" width="3" height="1" fill="#808080"/><rect x="12" y="12" width="1" height="1" fill="#000000"/><rect x="4" y="13" width="1" height="1" fill="#000000"/><rect x="5" y="13" width="1" height="1" fill="#d8d8d8"/><rect x="6" y="13" width="3" height="1" fill="#c0c0c0"/><rect x="9" y="13" width="2" height="1" fill="#808080"/><rect x="11" y="13" width="1" height="1" fill="#000000"/><rect x="5" y="14" width="7" height="1" fill="#000000"/></svg><div class="t" style="left:59.00px;top:64px;font-size:13.5px;line-height:16px;font-weight:normal;color:#000;-webkit-text-stroke:0.25px #000;transform:scaleX(0.8251);transform-origin:0 0;">Recycle Bin</div><div class="a" style="left:27px;top:88px;width:11px;height:1px;background-image:linear-gradient(to right,#a0a0a0 50%,transparent 50%);background-size:2px 1px"></div><div class="a" style="left:23px;top:84px;width:9px;height:9px;background:#fff;border:1px solid #aca899"></div><div class="a" style="left:25px;top:88px;width:5px;height:1px;background:#000"></div><svg class="a" style="left:38px;top:80px;" width="16" height="16" viewBox="0 0 16 16" shape-rendering="crispEdges"><rect x="2" y="1" width="5" height="1" fill="#c8c4b0"/><rect x="1" y="2" width="1" height="1" fill="#c8c4b0"/><rect x="2" y="2" width="1" height="1" fill="#ffff00"/><rect x="3" y="2" width="1" height="1" fill="#ffffff"/><rect x="4" y="2" width="1" height="1" fill="#ffff00"/><rect x="5" y="2" width="1" height="1" fill="#ffffff"/><rect x="6" y="2" width="1" height="1" fill="#ffff00"/><rect x="7" y="2" width="1" height="1" fill="#c8c4b0"/><rect x="0" y="3" width="1" height="1" fill="#c8c4b0"/><rect x="1" y="3" width="1" height="1" fill="#ffff00"/><rect x="2" y="3" width="1" height="1" fill="#ffffff"/><rect x="3" y="3" width="1" height="1" fill="#ffff00"/><rect x="4" y="3" width="1" height="1" fill="#ffffff"/><rect x="5" y="3" width="1" height="1" fill="#ffff00"/><rect x="6" y="3" width="1" height="1" fill="#ffffff"/><rect x="7" y="3" width="1" height="1" fill="#ffff00"/><rect x="8" y="3" width="6" height="1" fill="#c8c4b0"/><rect x="0" y="4" width="1" height="1" fill="#c8c4b0"/><rect x="1" y="4" width="13" height="1" fill="#ffffff"/><rect x="14" y="4" width="1" height="1" fill="#000000"/><rect x="0" y="5" width="1" height="1" fill="#c8c4b0"/><rect x="1" y="5" width="1" height="1" fill="#ffff00"/><rect x="2" y="5" width="1" height="1" fill="#ffffff"/><rect x="3" y="5" width="1" height="1" fill="#ffff00"/><rect x="4" y="5" width="1" height="1" fill="#ffffff"/><rect x="5" y="5" width="1" height="1" fill="#ffff00"/><rect x="6" y="5" width="1" height="1" fill="#ffffff"/><rect x="7" y="5" width="1" height="1" fill="#ffff00"/><rect x="8" y="5" width="1" height="1" fill="#ffffff"/><rect x="9" y="5" width="1" height="1" fill="#ffff00"/><rect x="10" y="5" width="1" height="1" fill="#ffffff"/><rect x="11" y="5" width="1" height="1" fill="#ffff00"/><rect x="12" y="5" width="1" height="1" fill="#ffffff"/><rect x="13" y="5" width="1" height="1" fill="#ffff00"/><rect x="14" y="5" width="1" height="1" fill="#000000"/><rect x="0" y="6" width="1" height="1" fill="#c8c4b0"/><rect x="1" y="6" width="1" height="1" fill="#ffffff"/><rect x="2" y="6" width="1" height="1" fill="#ffff00"/><rect x="3" y="6" width="1" height="1" fill="#ffffff"/><rect x="4" y="6" width="1" height="1" fill="#ffff00"/><rect x="5" y="6" width="1" height="1" fill="#ffffff"/><rect x="6" y="6" width="1" height="1" fill="#ffff00"/><rect x="7" y="6" width="1" height="1" fill="#ffffff"/><rect x="8" y="6" width="1" height="1" fill="#ffff00"/><rect x="9" y="6" width="1" height="1" fill="#ffffff"/><rect x="10" y="6" width="1" height="1" fill="#ffff00"/><rect x="11" y="6" width="1" height="1" fill="#ffffff"/><rect x="12" y="6" width="1" height="1" fill="#ffff00"/><rect x="13" y="6" width="1" height="1" fill="#ffffff"/><rect x="14" y="6" width="1" height="1" fill="#000000"/><rect x="0" y="7" width="1" height="1" fill="#c8c4b0"/><rect x="1" y="7" width="1" height="1" fill="#ffff00"/><rect x="2" y="7" width="1" height="1" fill="#ffffff"/><rect x="3" y="7" width="1" height="1" fill="#ffff00"/><rect x="4" y="7" width="1" height="1" fill="#ffffff"/><rect x="5" y="7" width="1" height="1" fill="#ffff00"/><rect x="6" y="7" width="1" height="1" fill="#ffffff"/><rect x="7" y="7" width="1" height="1" fill="#ffff00"/><rect x="8" y="7" width="1" height="1" fill="#ffffff"/><rect x="9" y="7" width="1" height="1" fill="#ffff00"/><rect x="10" y="7" width="1" height="1" fill="#ffffff"/><rect x="11" y="7" width="1" height="1" fill="#ffff00"/><rect x="12" y="7" width="1" height="1" fill="#ffffff"/><rect x="13" y="7" width="1" height="1" fill="#ffff00"/><rect x="14" y="7" width="1" height="1" fill="#000000"/><rect x="0" y="8" width="1" height="1" fill="#c8c4b0"/><rect x="1" y="8" width="1" height="1" fill="#ffffff"/><rect x="2" y="8" width="1" height="1" fill="#ffff00"/><rect x="3" y="8" width="1" height="1" fill="#ffffff"/><rect x="4" y="8" width="1" height="1" fill="#ffff00"/><rect x="5" y="8" width="1" height="1" fill="#ffffff"/><rect x="6" y="8" width="1" height="1" fill="#ffff00"/><rect x="7" y="8" width="1" height="1" fill="#ffffff"/><rect x="8" y="8" width="1" height="1" fill="#ffff00"/><rect x="9" y="8" width="1" height="1" fill="#ffffff"/><rect x="10" y="8" width="1" height="1" fill="#ffff00"/><rect x="11" y="8" width="1" height="1" fill="#ffffff"/><rect x="12" y="8" width="1" height="1" fill="#ffff00"/><rect x="13" y="8" width="1" height="1" fill="#ffffff"/><rect x="14" y="8" width="1" height="1" fill="#000000"/><rect x="0" y="9" width="1" height="1" fill="#c8c4b0"/><rect x="1" y="9" width="1" height="1" fill="#ffff00"/><rect x="2" y="9" width="1" height="1" fill="#ffffff"/><rect x="3" y="9" width="1" height="1" fill="#ffff00"/><rect x="4" y="9" width="1" height="1" fill="#ffffff"/><rect x="5" y="9" width="1" height="1" fill="#ffff00"/><rect x="6" y="9" width="1" height="1" fill="#ffffff"/><rect x="7" y="9" width="1" height="1" fill="#ffff00"/><rect x="8" y="9" width="1" height="1" fill="#ffffff"/><rect x="9" y="9" width="1" height="1" fill="#ffff00"/><rect x="10" y="9" width="1" height="1" fill="#ffffff"/><rect x="11" y="9" width="1" height="1" fill="#ffff00"/><rect x="12" y="9" width="1" height="1" fill="#ffffff"/><rect x="13" y="9" width="1" height="1" fill="#ffff00"/><rect x="14" y="9" width="1" height="1" fill="#000000"/><rect x="0" y="10" width="1" height="1" fill="#c8c4b0"/><rect x="1" y="10" width="1" height="1" fill="#ffffff"/><rect x="2" y="10" width="1" height="1" fill="#ffff00"/><rect x="3" y="10" width="1" height="1" fill="#ffffff"/><rect x="4" y="10" width="1" height="1" fill="#ffff00"/><rect x="5" y="10" width="1" height="1" fill="#ffffff"/><rect x="6" y="10" width="1" height="1" fill="#ffff00"/><rect x="7" y="10" width="1" height="1" fill="#ffffff"/><rect x="8" y="10" width="1" height="1" fill="#ffff00"/><rect x="9" y="10" width="1" height="1" fill="#ffffff"/><rect x="10" y="10" width="1" height="1" fill="#ffff00"/><rect x="11" y="10" width="1" height="1" fill="#ffffff"/><rect x="12" y="10" width="1" height="1" fill="#ffff00"/><rect x="13" y="10" width="1" height="1" fill="#ffffff"/><rect x="14" y="10" width="1" height="1" fill="#000000"/><rect x="0" y="11" width="1" height="1" fill="#c8c4b0"/><rect x="1" y="11" width="1" height="1" fill="#ffff00"/><rect x="2" y="11" width="1" height="1" fill="#ffffff"/><rect x="3" y="11" width="1" height="1" fill="#ffff00"/><rect x="4" y="11" width="1" height="1" fill="#ffffff"/><rect x="5" y="11" width="1" height="1" fill="#ffff00"/><rect x="6" y="11" width="1" height="1" fill="#ffffff"/><rect x="7" y="11" width="1" height="1" fill="#ffff00"/><rect x="8" y="11" width="1" height="1" fill="#ffffff"/><rect x="9" y="11" width="1" height="1" fill="#ffff00"/><rect x="10" y="11" width="1" height="1" fill="#ffffff"/><rect x="11" y="11" width="1" height="1" fill="#ffff00"/><rect x="12" y="11" width="1" height="1" fill="#ffffff"/><rect x="13" y="11" width="1" height="1" fill="#ffff00"/><rect x="14" y="11" width="1" height="1" fill="#000000"/><rect x="0" y="12" width="14" height="1" fill="#c8c4b0"/><rect x="14" y="12" width="1" height="1" fill="#000000"/><rect x="1" y="13" width="14" height="1" fill="#000000"/></svg><div class="t" style="left:59.00px;top:80px;font-size:13.5px;line-height:16px;font-weight:normal;color:#000;-webkit-text-stroke:0.25px #000;transform:scaleX(0.8448);transform-origin:0 0;">Documents</div><div class="a" style="left:46px;top:104px;width:11px;height:1px;background-image:linear-gradient(to right,#a0a0a0 50%,transparent 50%);background-size:2px 1px"></div><div class="a" style="left:42px;top:100px;width:9px;height:9px;background:#fff;border:1px solid #aca899"></div><div class="a" style="left:44px;top:104px;width:5px;height:1px;background:#000"></div><div class="a" style="left:46px;top:102px;width:1px;height:5px;background:#000"></div><svg class="a" style="left:57px;top:96px;" width="16" height="16" viewBox="0 0 16 16" shape-rendering="crispEdges"><rect x="2" y="1" width="5" height="1" fill="#c8c4b0"/><rect x="1" y="2" width="1" height="1" fill="#c8c4b0"/><rect x="2" y="2" width="1" height="1" fill="#ffff00"/><rect x="3" y="2" width="1" height="1" fill="#ffffff"/><rect x="4" y="2" width="1" height="1" fill="#ffff00"/><rect x="5" y="2" width="1" height="1" fill="#ffffff"/><rect x="6" y="2" width="1" height="1" fill="#ffff00"/><rect x="7" y="2" width="1" height="1" fill="#c8c4b0"/><rect x="0" y="3" width="1" height="1" fill="#c8c4b0"/><rect x="1" y="3" width="1" height="1" fill="#ffff00"/><rect x="2" y="3" width="1" height="1" fill="#ffffff"/><rect x="3" y="3" width="1" height="1" fill="#ffff00"/><rect x="4" y="3" width="1" height="1" fill="#ffffff"/><rect x="5" y="3" width="1" height="1" fill="#ffff00"/><rect x="6" y="3" width="1" height="1" fill="#ffffff"/><rect x="7" y="3" width="1" height="1" fill="#ffff00"/><rect x="8" y="3" width="6" height="1" fill="#c8c4b0"/><rect x="0" y="4" width="1" height="1" fill="#c8c4b0"/><rect x="1" y="4" width="13" height="1" fill="#ffffff"/><rect x="14" y="4" width="1" height="1" fill="#000000"/><rect x="0" y="5" width="1" height="1" fill="#c8c4b0"/><rect x="1" y="5" width="1" height="1" fill="#ffff00"/><rect x="2" y="5" width="1" height="1" fill="#ffffff"/><rect x="3" y="5" width="1" height="1" fill="#ffff00"/><rect x="4" y="5" width="1" height="1" fill="#ffffff"/><rect x="5" y="5" width="1" height="1" fill="#ffff00"/><rect x="6" y="5" width="1" height="1" fill="#ffffff"/><rect x="7" y="5" width="1" height="1" fill="#ffff00"/><rect x="8" y="5" width="1" height="1" fill="#ffffff"/><rect x="9" y="5" width="1" height="1" fill="#ffff00"/><rect x="10" y="5" width="1" height="1" fill="#ffffff"/><rect x="11" y="5" width="1" height="1" fill="#ffff00"/><rect x="12" y="5" width="1" height="1" fill="#ffffff"/><rect x="13" y="5" width="1" height="1" fill="#ffff00"/><rect x="14" y="5" width="1" height="1" fill="#000000"/><rect x="0" y="6" width="1" height="1" fill="#c8c4b0"/><rect x="1" y="6" width="1" height="1" fill="#ffffff"/><rect x="2" y="6" width="1" height="1" fill="#ffff00"/><rect x="3" y="6" width="1" height="1" fill="#ffffff"/><rect x="4" y="6" width="1" height="1" fill="#ffff00"/><rect x="5" y="6" width="1" height="1" fill="#ffffff"/><rect x="6" y="6" width="1" height="1" fill="#ffff00"/><rect x="7" y="6" width="1" height="1" fill="#ffffff"/><rect x="8" y="6" width="1" height="1" fill="#ffff00"/><rect x="9" y="6" width="1" height="1" fill="#ffffff"/><rect x="10" y="6" width="1" height="1" fill="#ffff00"/><rect x="11" y="6" width="1" height="1" fill="#ffffff"/><rect x="12" y="6" width="1" height="1" fill="#ffff00"/><rect x="13" y="6" width="1" height="1" fill="#ffffff"/><rect x="14" y="6" width="1" height="1" fill="#000000"/><rect x="0" y="7" width="1" height="1" fill="#c8c4b0"/><rect x="1" y="7" width="1" height="1" fill="#ffff00"/><rect x="2" y="7" width="1" height="1" fill="#ffffff"/><rect x="3" y="7" width="1" height="1" fill="#ffff00"/><rect x="4" y="7" width="1" height="1" fill="#ffffff"/><rect x="5" y="7" width="1" height="1" fill="#ffff00"/><rect x="6" y="7" width="1" height="1" fill="#ffffff"/><rect x="7" y="7" width="1" height="1" fill="#ffff00"/><rect x="8" y="7" width="1" height="1" fill="#ffffff"/><rect x="9" y="7" width="1" height="1" fill="#ffff00"/><rect x="10" y="7" width="1" height="1" fill="#ffffff"/><rect x="11" y="7" width="1" height="1" fill="#ffff00"/><rect x="12" y="7" width="1" height="1" fill="#ffffff"/><rect x="13" y="7" width="1" height="1" fill="#ffff00"/><rect x="14" y="7" width="1" height="1" fill="#000000"/><rect x="0" y="8" width="1" height="1" fill="#c8c4b0"/><rect x="1" y="8" width="1" height="1" fill="#ffffff"/><rect x="2" y="8" width="1" height="1" fill="#ffff00"/><rect x="3" y="8" width="1" height="1" fill="#ffffff"/><rect x="4" y="8" width="1" height="1" fill="#ffff00"/><rect x="5" y="8" width="1" height="1" fill="#ffffff"/><rect x="6" y="8" width="1" height="1" fill="#ffff00"/><rect x="7" y="8" width="1" height="1" fill="#ffffff"/><rect x="8" y="8" width="1" height="1" fill="#ffff00"/><rect x="9" y="8" width="1" height="1" fill="#ffffff"/><rect x="10" y="8" width="1" height="1" fill="#ffff00"/><rect x="11" y="8" width="1" height="1" fill="#ffffff"/><rect x="12" y="8" width="1" height="1" fill="#ffff00"/><rect x="13" y="8" width="1" height="1" fill="#ffffff"/><rect x="14" y="8" width="1" height="1" fill="#000000"/><rect x="0" y="9" width="1" height="1" fill="#c8c4b0"/><rect x="1" y="9" width="1" height="1" fill="#ffff00"/><rect x="2" y="9" width="1" height="1" fill="#ffffff"/><rect x="3" y="9" width="1" height="1" fill="#ffff00"/><rect x="4" y="9" width="1" height="1" fill="#ffffff"/><rect x="5" y="9" width="1" height="1" fill="#ffff00"/><rect x="6" y="9" width="1" height="1" fill="#ffffff"/><rect x="7" y="9" width="1" height="1" fill="#ffff00"/><rect x="8" y="9" width="1" height="1" fill="#ffffff"/><rect x="9" y="9" width="1" height="1" fill="#ffff00"/><rect x="10" y="9" width="1" height="1" fill="#ffffff"/><rect x="11" y="9" width="1" height="1" fill="#ffff00"/><rect x="12" y="9" width="1" height="1" fill="#ffffff"/><rect x="13" y="9" width="1" height="1" fill="#ffff00"/><rect x="14" y="9" width="1" height="1" fill="#000000"/><rect x="0" y="10" width="1" height="1" fill="#c8c4b0"/><rect x="1" y="10" width="1" height="1" fill="#ffffff"/><rect x="2" y="10" width="1" height="1" fill="#ffff00"/><rect x="3" y="10" width="1" height="1" fill="#ffffff"/><rect x="4" y="10" width="1" height="1" fill="#ffff00"/><rect x="5" y="10" width="1" height="1" fill="#ffffff"/><rect x="6" y="10" width="1" height="1" fill="#ffff00"/><rect x="7" y="10" width="1" height="1" fill="#ffffff"/><rect x="8" y="10" width="1" height="1" fill="#ffff00"/><rect x="9" y="10" width="1" height="1" fill="#ffffff"/><rect x="10" y="10" width="1" height="1" fill="#ffff00"/><rect x="11" y="10" width="1" height="1" fill="#ffffff"/><rect x="12" y="10" width="1" height="1" fill="#ffff00"/><rect x="13" y="10" width="1" height="1" fill="#ffffff"/><rect x="14" y="10" width="1" height="1" fill="#000000"/><rect x="0" y="11" width="1" height="1" fill="#c8c4b0"/><rect x="1" y="11" width="1" height="1" fill="#ffff00"/><rect x="2" y="11" width="1" height="1" fill="#ffffff"/><rect x="3" y="11" width="1" height="1" fill="#ffff00"/><rect x="4" y="11" width="1" height="1" fill="#ffffff"/><rect x="5" y="11" width="1" height="1" fill="#ffff00"/><rect x="6" y="11" width="1" height="1" fill="#ffffff"/><rect x="7" y="11" width="1" height="1" fill="#ffff00"/><rect x="8" y="11" width="1" height="1" fill="#ffffff"/><rect x="9" y="11" width="1" height="1" fill="#ffff00"/><rect x="10" y="11" width="1" height="1" fill="#ffffff"/><rect x="11" y="11" width="1" height="1" fill="#ffff00"/><rect x="12" y="11" width="1" height="1" fill="#ffffff"/><rect x="13" y="11" width="1" height="1" fill="#ffff00"/><rect x="14" y="11" width="1" height="1" fill="#000000"/><rect x="0" y="12" width="14" height="1" fill="#c8c4b0"/><rect x="14" y="12" width="1" height="1" fill="#000000"/><rect x="1" y="13" width="14" height="1" fill="#000000"/></svg><div class="t" style="left:78.00px;top:96px;font-size:13.5px;line-height:16px;font-weight:normal;color:#000;-webkit-text-stroke:0.25px #000;transform:scaleX(0.8343);transform-origin:0 0;">CAM for KU</div><div class="a" style="left:46px;top:120px;width:11px;height:1px;background-image:linear-gradient(to right,#a0a0a0 50%,transparent 50%);background-size:2px 1px"></div><svg class="a" style="left:57px;top:112px;" width="16" height="16" viewBox="0 0 16 16" shape-rendering="crispEdges"><rect x="3" y="0" width="3" height="1" fill="#ffff00"/><rect x="6" y="0" width="2" height="1" fill="#000000"/><rect x="3" y="1" width="3" height="1" fill="#ffff00"/><rect x="6" y="1" width="1" height="1" fill="#000000"/><rect x="7" y="1" width="1" height="1" fill="#ffffff"/><rect x="8" y="1" width="4" height="1" fill="#000000"/><rect x="3" y="2" width="2" height="1" fill="#ffff00"/><rect x="5" y="2" width="3" height="1" fill="#ffffff"/><rect x="8" y="2" width="2" height="1" fill="#ffff00"/><rect x="10" y="2" width="1" height="1" fill="#ffffff"/><rect x="11" y="2" width="1" height="1" fill="#000000"/><rect x="12" y="2" width="1" height="1" fill="#00ffff"/><rect x="13" y="2" width="1" height="1" fill="#000000"/><rect x="3" y="3" width="1" height="1" fill="#ffff00"/><rect x="4" y="3" width="1" height="1" fill="#ffffff"/><rect x="5" y="3" width="2" height="1" fill="#ff0000"/><rect x="7" y="3" width="1" height="1" fill="#ffffff"/><rect x="8" y="3" width="2" height="1" fill="#ffff00"/><rect x="10" y="3" width="1" height="1" fill="#ff0000"/><rect x="11" y="3" width="2" height="1" fill="#ffffff"/><rect x="13" y="3" width="1" height="1" fill="#000000"/><rect x="3" y="4" width="1" height="1" fill="#ffff00"/><rect x="4" y="4" width="2" height="1" fill="#ff0000"/><rect x="6" y="4" width="2" height="1" fill="#ffffff"/><rect x="8" y="4" width="2" height="1" fill="#ffff00"/><rect x="10" y="4" width="2" height="1" fill="#ff0000"/><rect x="12" y="4" width="1" height="1" fill="#ffffff"/><rect x="13" y="4" width="2" height="1" fill="#000000"/><rect x="4" y="5" width="1" height="1" fill="#ff0000"/><rect x="5" y="5" width="6" height="1" fill="#ffffff"/><rect x="11" y="5" width="1" height="1" fill="#ff0000"/><rect x="12" y="5" width="2" height="1" fill="#ffffff"/><rect x="14" y="5" width="1" height="1" fill="#000000"/><rect x="0" y="6" width="4" height="1" fill="#00ff00"/><rect x="4" y="6" width="1" height="1" fill="#ffffff"/><rect x="5" y="6" width="2" height="1" fill="#00ff00"/><rect x="7" y="6" width="1" height="1" fill="#ffffff"/><rect x="8" y="6" width="2" height="1" fill="#00ff00"/><rect x="10" y="6" width="1" height="1" fill="#000000"/><rect x="11" y="6" width="3" height="1" fill="#ffffff"/><rect x="14" y="6" width="2" height="1" fill="#000000"/><rect x="0" y="7" width="1" height="1" fill="#00ff00"/><rect x="1" y="7" width="3" height="1" fill="#ffffff"/><rect x="4" y="7" width="2" height="1" fill="#00ff00"/><rect x="6" y="7" width="2" height="1" fill="#ffffff"/><rect x="8" y="7" width="2" height="1" fill="#00ff00"/><rect x="10" y="7" width="2" height="1" fill="#ffffff"/><rect x="12" y="7" width="1" height="1" fill="#ffff00"/><rect x="13" y="7" width="2" height="1" fill="#00ffff"/><rect x="15" y="7" width="1" height="1" fill="#000000"/><rect x="0" y="8" width="1" height="1" fill="#00ff00"/><rect x="1" y="8" width="5" height="1" fill="#808080"/><rect x="6" y="8" width="1" height="1" fill="#00ff00"/><rect x="7" y="8" width="3" height="1" fill="#808080"/><rect x="10" y="8" width="1" height="1" fill="#ffffff"/><rect x="11" y="8" width="2" height="1" fill="#ffff00"/><rect x="13" y="8" width="1" height="1" fill="#00ffff"/><rect x="14" y="8" width="1" height="1" fill="#ffff00"/><rect x="15" y="8" width="1" height="1" fill="#000000"/><rect x="0" y="9" width="1" height="1" fill="#00ff00"/><rect x="1" y="9" width="5" height="1" fill="#808080"/><rect x="6" y="9" width="1" height="1" fill="#00ff00"/><rect x="7" y="9" width="3" height="1" fill="#808080"/><rect x="10" y="9" width="1" height="1" fill="#ffffff"/><rect x="11" y="9" width="2" height="1" fill="#ff0000"/><rect x="13" y="9" width="2" height="1" fill="#ffff00"/><rect x="15" y="9" width="1" height="1" fill="#000000"/><rect x="0" y="10" width="10" height="1" fill="#00ff00"/><rect x="10" y="10" width="2" height="1" fill="#ff0000"/><rect x="12" y="10" width="3" height="1" fill="#ffff00"/><rect x="15" y="10" width="1" height="1" fill="#000000"/><rect x="0" y="11" width="9" height="1" fill="#000000"/><rect x="9" y="11" width="1" height="1" fill="#ff0000"/><rect x="10" y="11" width="1" height="1" fill="#000000"/><rect x="11" y="11" width="4" height="1" fill="#ffff00"/><rect x="15" y="11" width="1" height="1" fill="#000000"/><rect x="0" y="12" width="1" height="1" fill="#000000"/><rect x="1" y="12" width="9" height="1" fill="#000080"/><rect x="10" y="12" width="6" height="1" fill="#000000"/><rect x="0" y="13" width="1" height="1" fill="#000000"/><rect x="1" y="13" width="2" height="1" fill="#000080"/><rect x="3" y="13" width="1" height="1" fill="#ffffff"/><rect x="4" y="13" width="6" height="1" fill="#000080"/><rect x="10" y="13" width="1" height="1" fill="#000000"/><rect x="2" y="14" width="10" height="1" fill="#000000"/></svg><div class="t" style="left:78.00px;top:112px;font-size:13.5px;line-height:16px;font-weight:normal;color:#000;-webkit-text-stroke:0.25px #000;transform:scaleX(0.8346);transform-origin:0 0;">CAM Outputs for KU</div><div class="a" style="left:46px;top:136px;width:11px;height:1px;background-image:linear-gradient(to right,#a0a0a0 50%,transparent 50%);background-size:2px 1px"></div><div class="a" style="left:76px;top:128px;width:45px;height:16px;background:#ece9d8"></div><svg class="a" style="left:57px;top:128px;" width="16" height="16" viewBox="0 0 16 16" shape-rendering="crispEdges"><rect x="3" y="0" width="9" height="1" fill="#000000"/><rect x="3" y="1" width="1" height="1" fill="#000000"/><rect x="4" y="1" width="7" height="1" fill="#c0c0c0"/><rect x="11" y="1" width="1" height="1" fill="#ffffff"/><rect x="12" y="1" width="1" height="1" fill="#000000"/><rect x="3" y="2" width="1" height="1" fill="#000000"/><rect x="4" y="2" width="7" height="1" fill="#c0c0c0"/><rect x="11" y="2" width="2" height="1" fill="#ffffff"/><rect x="13" y="2" width="1" height="1" fill="#000000"/><rect x="2" y="3" width="1" height="1" fill="#808080"/><rect x="3" y="3" width="1" height="1" fill="#000000"/><rect x="4" y="3" width="7" height="1" fill="#c0c0c0"/><rect x="11" y="3" width="4" height="1" fill="#000000"/><rect x="1" y="4" width="2" height="1" fill="#808080"/><rect x="3" y="4" width="1" height="1" fill="#c0c0c0"/><rect x="4" y="4" width="2" height="1" fill="#808080"/><rect x="6" y="4" width="7" height="1" fill="#c0c0c0"/><rect x="13" y="4" width="1" height="1" fill="#ffff00"/><rect x="14" y="4" width="1" height="1" fill="#000000"/><rect x="1" y="5" width="1" height="1" fill="#0000ff"/><rect x="2" y="5" width="1" height="1" fill="#808080"/><rect x="3" y="5" width="2" height="1" fill="#c0c0c0"/><rect x="5" y="5" width="1" height="1" fill="#008000"/><rect x="6" y="5" width="7" height="1" fill="#c0c0c0"/><rect x="13" y="5" width="1" height="1" fill="#ffff00"/><rect x="14" y="5" width="1" height="1" fill="#000000"/><rect x="1" y="6" width="1" height="1" fill="#0000ff"/><rect x="2" y="6" width="1" height="1" fill="#808080"/><rect x="3" y="6" width="2" height="1" fill="#c0c0c0"/><rect x="5" y="6" width="1" height="1" fill="#008000"/><rect x="6" y="6" width="1" height="1" fill="#808080"/><rect x="7" y="6" width="6" height="1" fill="#c0c0c0"/><rect x="13" y="6" width="1" height="1" fill="#ffff00"/><rect x="14" y="6" width="1" height="1" fill="#000000"/><rect x="1" y="7" width="1" height="1" fill="#0000ff"/><rect x="2" y="7" width="1" height="1" fill="#808080"/><rect x="3" y="7" width="2" height="1" fill="#c0c0c0"/><rect x="5" y="7" width="1" height="1" fill="#008000"/><rect x="6" y="7" width="1" height="1" fill="#808080"/><rect x="7" y="7" width="6" height="1" fill="#c0c0c0"/><rect x="13" y="7" width="1" height="1" fill="#ffff00"/><rect x="14" y="7" width="1" height="1" fill="#000000"/><rect x="1" y="8" width="1" height="1" fill="#0000ff"/><rect x="2" y="8" width="1" height="1" fill="#808080"/><rect x="3" y="8" width="2" height="1" fill="#c0c0c0"/><rect x="5" y="8" width="1" height="1" fill="#008000"/><rect x="6" y="8" width="7" height="1" fill="#c0c0c0"/><rect x="13" y="8" width="1" height="1" fill="#ffff00"/><rect x="14" y="8" width="1" height="1" fill="#000000"/><rect x="1" y="9" width="1" height="1" fill="#0000ff"/><rect x="2" y="9" width="1" height="1" fill="#808080"/><rect x="3" y="9" width="2" height="1" fill="#c0c0c0"/><rect x="5" y="9" width="1" height="1" fill="#008000"/><rect x="6" y="9" width="7" height="1" fill="#c0c0c0"/><rect x="13" y="9" width="1" height="1" fill="#ffff00"/><rect x="14" y="9" width="1" height="1" fill="#000000"/><rect x="1" y="10" width="1" height="1" fill="#0000ff"/><rect x="2" y="10" width="1" height="1" fill="#808080"/><rect x="3" y="10" width="2" height="1" fill="#c0c0c0"/><rect x="5" y="10" width="1" height="1" fill="#008000"/><rect x="6" y="10" width="7" height="1" fill="#c0c0c0"/><rect x="13" y="10" width="1" height="1" fill="#ffff00"/><rect x="14" y="10" width="1" height="1" fill="#000000"/><rect x="1" y="11" width="1" height="1" fill="#0000ff"/><rect x="2" y="11" width="3" height="1" fill="#808080"/><rect x="5" y="11" width="1" height="1" fill="#008000"/><rect x="6" y="11" width="7" height="1" fill="#808080"/><rect x="13" y="11" width="1" height="1" fill="#ffff00"/><rect x="14" y="11" width="1" height="1" fill="#000000"/><rect x="1" y="12" width="4" height="1" fill="#000000"/><rect x="5" y="12" width="1" height="1" fill="#008000"/><rect x="6" y="12" width="9" height="1" fill="#000000"/><rect x="5" y="13" width="1" height="1" fill="#000000"/></svg><div class="t" style="left:78.00px;top:128px;font-size:13.5px;line-height:16px;font-weight:normal;color:#000;-webkit-text-stroke:0.25px #000;transform:scaleX(0.8246);transform-origin:0 0;">KU.NET</div><div class="a" style="left:46px;top:152px;width:11px;height:1px;background-image:linear-gradient(to right,#a0a0a0 50%,transparent 50%);background-size:2px 1px"></div><svg class="a" style="left:57px;top:144px;" width="16" height="16" viewBox="0 0 16 16" shape-rendering="crispEdges"><rect x="3" y="0" width="8" height="1" fill="#ffff00"/><rect x="12" y="0" width="1" height="1" fill="#000080"/><rect x="3" y="1" width="8" height="1" fill="#ffff00"/><rect x="13" y="1" width="1" height="1" fill="#000080"/><rect x="3" y="2" width="8" height="1" fill="#ffff00"/><rect x="14" y="2" width="1" height="1" fill="#000080"/><rect x="1" y="3" width="14" height="1" fill="#000000"/><rect x="1" y="4" width="1" height="1" fill="#000000"/><rect x="2" y="4" width="1" height="1" fill="#00ff00"/><rect x="3" y="4" width="2" height="1" fill="#ffffff"/><rect x="5" y="4" width="2" height="1" fill="#808080"/><rect x="7" y="4" width="1" height="1" fill="#ffffff"/><rect x="8" y="4" width="1" height="1" fill="#00ff00"/><rect x="9" y="4" width="1" height="1" fill="#000000"/><rect x="10" y="4" width="1" height="1" fill="#ffffff"/><rect x="11" y="4" width="2" height="1" fill="#c0c0c0"/><rect x="13" y="4" width="2" height="1" fill="#000000"/><rect x="1" y="5" width="1" height="1" fill="#000000"/><rect x="2" y="5" width="1" height="1" fill="#00ff00"/><rect x="3" y="5" width="5" height="1" fill="#808080"/><rect x="8" y="5" width="1" height="1" fill="#00ff00"/><rect x="9" y="5" width="1" height="1" fill="#000000"/><rect x="10" y="5" width="1" height="1" fill="#ffffff"/><rect x="11" y="5" width="2" height="1" fill="#c0c0c0"/><rect x="13" y="5" width="2" height="1" fill="#000000"/><rect x="1" y="6" width="1" height="1" fill="#000000"/><rect x="2" y="6" width="1" height="1" fill="#00ff00"/><rect x="3" y="6" width="2" height="1" fill="#ffffff"/><rect x="5" y="6" width="1" height="1" fill="#808080"/><rect x="6" y="6" width="2" height="1" fill="#ffffff"/><rect x="8" y="6" width="1" height="1" fill="#00ff00"/><rect x="9" y="6" width="1" height="1" fill="#000000"/><rect x="10" y="6" width="1" height="1" fill="#ffffff"/><rect x="11" y="6" width="2" height="1" fill="#c0c0c0"/><rect x="13" y="6" width="2" height="1" fill="#000000"/><rect x="1" y="7" width="1" height="1" fill="#000000"/><rect x="2" y="7" width="1" height="1" fill="#00ff00"/><rect x="3" y="7" width="5" height="1" fill="#808080"/><rect x="8" y="7" width="1" height="1" fill="#00ff00"/><rect x="9" y="7" width="1" height="1" fill="#000000"/><rect x="10" y="7" width="1" height="1" fill="#ffffff"/><rect x="11" y="7" width="2" height="1" fill="#c0c0c0"/><rect x="13" y="7" width="2" height="1" fill="#000000"/><rect x="1" y="8" width="1" height="1" fill="#000000"/><rect x="2" y="8" width="1" height="1" fill="#00ff00"/><rect x="3" y="8" width="2" height="1" fill="#ffffff"/><rect x="5" y="8" width="1" height="1" fill="#808080"/><rect x="6" y="8" width="2" height="1" fill="#ffffff"/><rect x="8" y="8" width="1" height="1" fill="#00ff00"/><rect x="9" y="8" width="1" height="1" fill="#000000"/><rect x="10" y="8" width="1" height="1" fill="#ffffff"/><rect x="11" y="8" width="2" height="1" fill="#c0c0c0"/><rect x="13" y="8" width="2" height="1" fill="#000000"/><rect x="1" y="9" width="1" height="1" fill="#000000"/><rect x="2" y="9" width="7" height="1" fill="#00ff00"/><rect x="9" y="9" width="1" height="1" fill="#000000"/><rect x="10" y="9" width="1" height="1" fill="#ffffff"/><rect x="11" y="9" width="2" height="1" fill="#c0c0c0"/><rect x="13" y="9" width="2" height="1" fill="#000000"/><rect x="1" y="10" width="14" height="1" fill="#000000"/><rect x="1" y="11" width="4" height="1" fill="#000080"/><rect x="5" y="11" width="1" height="1" fill="#ffffff"/><rect x="6" y="11" width="8" height="1" fill="#000080"/><rect x="14" y="11" width="1" height="1" fill="#000000"/><rect x="1" y="12" width="13" height="1" fill="#000080"/><rect x="14" y="12" width="1" height="1" fill="#000000"/><rect x="1" y="13" width="14" height="1" fill="#000000"/></svg><div class="t" style="left:78.00px;top:144px;font-size:13.5px;line-height:16px;font-weight:normal;color:#000;-webkit-text-stroke:0.25px #000;transform:scaleX(0.8394);transform-origin:0 0;">KU.PCB</div><div class="a" style="left:46px;top:168px;width:11px;height:1px;background-image:linear-gradient(to right,#a0a0a0 50%,transparent 50%);background-size:2px 1px"></div><svg class="a" style="left:57px;top:160px;" width="16" height="16" viewBox="0 0 16 16" shape-rendering="crispEdges"><rect x="3" y="0" width="1" height="1" fill="#000000"/><rect x="5" y="0" width="6" height="1" fill="#808080"/><rect x="11" y="0" width="2" height="1" fill="#ffffff"/><rect x="13" y="0" width="1" height="1" fill="#000000"/><rect x="3" y="1" width="1" height="1" fill="#000000"/><rect x="5" y="1" width="6" height="1" fill="#808080"/><rect x="11" y="1" width="3" height="1" fill="#ffffff"/><rect x="14" y="1" width="1" height="1" fill="#000000"/><rect x="3" y="2" width="1" height="1" fill="#000000"/><rect x="5" y="2" width="6" height="1" fill="#808080"/><rect x="11" y="2" width="1" height="1" fill="#000000"/><rect x="12" y="2" width="2" height="1" fill="#ffffff"/><rect x="14" y="2" width="1" height="1" fill="#000000"/><rect x="1" y="3" width="9" height="1" fill="#000000"/><rect x="10" y="3" width="2" height="1" fill="#808080"/><rect x="12" y="3" width="2" height="1" fill="#000000"/><rect x="14" y="3" width="1" height="1" fill="#808080"/><rect x="1" y="4" width="2" height="1" fill="#f8c000"/><rect x="3" y="4" width="1" height="1" fill="#000000"/><rect x="4" y="4" width="5" height="1" fill="#f8c000"/><rect x="9" y="4" width="1" height="1" fill="#ffffff"/><rect x="10" y="4" width="5" height="1" fill="#808080"/><rect x="1" y="5" width="1" height="1" fill="#f8c000"/><rect x="2" y="5" width="1" height="1" fill="#000000"/><rect x="3" y="5" width="1" height="1" fill="#ffff00"/><rect x="4" y="5" width="1" height="1" fill="#000000"/><rect x="5" y="5" width="3" height="1" fill="#f8c000"/><rect x="8" y="5" width="1" height="1" fill="#ffffff"/><rect x="9" y="5" width="1" height="1" fill="#c0c0c0"/><rect x="10" y="5" width="5" height="1" fill="#808080"/><rect x="1" y="6" width="2" height="1" fill="#f8c000"/><rect x="3" y="6" width="1" height="1" fill="#000000"/><rect x="4" y="6" width="3" height="1" fill="#f8c000"/><rect x="7" y="6" width="1" height="1" fill="#000000"/><rect x="8" y="6" width="1" height="1" fill="#00ff00"/><rect x="9" y="6" width="1" height="1" fill="#f8c000"/><rect x="10" y="6" width="5" height="1" fill="#808080"/><rect x="1" y="7" width="2" height="1" fill="#f8c000"/><rect x="3" y="7" width="1" height="1" fill="#000000"/><rect x="4" y="7" width="2" height="1" fill="#f8c000"/><rect x="6" y="7" width="1" height="1" fill="#000000"/><rect x="7" y="7" width="2" height="1" fill="#00ff00"/><rect x="9" y="7" width="1" height="1" fill="#f8c000"/><rect x="10" y="7" width="5" height="1" fill="#808080"/><rect x="1" y="8" width="1" height="1" fill="#f8c000"/><rect x="2" y="8" width="1" height="1" fill="#3a6ea5"/><rect x="3" y="8" width="1" height="1" fill="#000000"/><rect x="4" y="8" width="2" height="1" fill="#f8c000"/><rect x="6" y="8" width="1" height="1" fill="#000000"/><rect x="7" y="8" width="3" height="1" fill="#f8c000"/><rect x="10" y="8" width="5" height="1" fill="#808080"/><rect x="1" y="9" width="1" height="1" fill="#f8c000"/><rect x="2" y="9" width="1" height="1" fill="#3a6ea5"/><rect x="3" y="9" width="2" height="1" fill="#f8c000"/><rect x="5" y="9" width="1" height="1" fill="#000000"/><rect x="6" y="9" width="1" height="1" fill="#3a6ea5"/><rect x="7" y="9" width="3" height="1" fill="#f8c000"/><rect x="10" y="9" width="5" height="1" fill="#808080"/><rect x="1" y="10" width="1" height="1" fill="#f8c000"/><rect x="2" y="10" width="1" height="1" fill="#3a6ea5"/><rect x="3" y="10" width="2" height="1" fill="#f8c000"/><rect x="5" y="10" width="1" height="1" fill="#000000"/><rect x="6" y="10" width="1" height="1" fill="#3a6ea5"/><rect x="7" y="10" width="3" height="1" fill="#f8c000"/><rect x="10" y="10" width="5" height="1" fill="#808080"/><rect x="1" y="11" width="5" height="1" fill="#f8c000"/><rect x="6" y="11" width="1" height="1" fill="#000000"/><rect x="7" y="11" width="3" height="1" fill="#f8c000"/><rect x="10" y="11" width="5" height="1" fill="#808080"/><rect x="1" y="12" width="6" height="1" fill="#f8c000"/><rect x="7" y="12" width="1" height="1" fill="#000000"/><rect x="8" y="12" width="2" height="1" fill="#f8c000"/><rect x="10" y="12" width="5" height="1" fill="#808080"/><rect x="1" y="13" width="7" height="1" fill="#f8c000"/><rect x="8" y="13" width="1" height="1" fill="#000000"/><rect x="9" y="13" width="1" height="1" fill="#f8c000"/><rect x="10" y="13" width="5" height="1" fill="#808080"/><rect x="8" y="14" width="1" height="1" fill="#000000"/></svg><div class="t" style="left:78.00px;top:160px;font-size:13.5px;line-height:16px;font-weight:normal;color:#000;-webkit-text-stroke:0.25px #000;transform:scaleX(0.8280);transform-origin:0 0;">KU.Sch</div><div class="a" style="left:46px;top:184px;width:11px;height:1px;background-image:linear-gradient(to right,#a0a0a0 50%,transparent 50%);background-size:2px 1px"></div><svg class="a" style="left:57px;top:176px;" width="16" height="16" viewBox="0 0 16 16" shape-rendering="crispEdges"><rect x="3" y="0" width="8" height="1" fill="#ffff00"/><rect x="12" y="0" width="1" height="1" fill="#000080"/><rect x="3" y="1" width="8" height="1" fill="#ffff00"/><rect x="13" y="1" width="1" height="1" fill="#000080"/><rect x="3" y="2" width="8" height="1" fill="#ffff00"/><rect x="14" y="2" width="1" height="1" fill="#000080"/><rect x="1" y="3" width="14" height="1" fill="#000000"/><rect x="1" y="4" width="1" height="1" fill="#000000"/><rect x="2" y="4" width="1" height="1" fill="#00ff00"/><rect x="3" y="4" width="2" height="1" fill="#ffffff"/><rect x="5" y="4" width="2" height="1" fill="#808080"/><rect x="7" y="4" width="1" height="1" fill="#ffffff"/><rect x="8" y="4" width="1" height="1" fill="#00ff00"/><rect x="9" y="4" width="1" height="1" fill="#000000"/><rect x="10" y="4" width="1" height="1" fill="#ffffff"/><rect x="11" y="4" width="2" height="1" fill="#c0c0c0"/><rect x="13" y="4" width="2" height="1" fill="#000000"/><rect x="1" y="5" width="1" height="1" fill="#000000"/><rect x="2" y="5" width="1" height="1" fill="#00ff00"/><rect x="3" y="5" width="5" height="1" fill="#808080"/><rect x="8" y="5" width="1" height="1" fill="#00ff00"/><rect x="9" y="5" width="1" height="1" fill="#000000"/><rect x="10" y="5" width="1" height="1" fill="#ffffff"/><rect x="11" y="5" width="2" height="1" fill="#c0c0c0"/><rect x="13" y="5" width="2" height="1" fill="#000000"/><rect x="1" y="6" width="1" height="1" fill="#000000"/><rect x="2" y="6" width="1" height="1" fill="#00ff00"/><rect x="3" y="6" width="2" height="1" fill="#ffffff"/><rect x="5" y="6" width="1" height="1" fill="#808080"/><rect x="6" y="6" width="2" height="1" fill="#ffffff"/><rect x="8" y="6" width="1" height="1" fill="#00ff00"/><rect x="9" y="6" width="1" height="1" fill="#000000"/><rect x="10" y="6" width="1" height="1" fill="#ffffff"/><rect x="11" y="6" width="2" height="1" fill="#c0c0c0"/><rect x="13" y="6" width="2" height="1" fill="#000000"/><rect x="1" y="7" width="1" height="1" fill="#000000"/><rect x="2" y="7" width="1" height="1" fill="#00ff00"/><rect x="3" y="7" width="5" height="1" fill="#808080"/><rect x="8" y="7" width="1" height="1" fill="#00ff00"/><rect x="9" y="7" width="1" height="1" fill="#000000"/><rect x="10" y="7" width="1" height="1" fill="#ffffff"/><rect x="11" y="7" width="2" height="1" fill="#c0c0c0"/><rect x="13" y="7" width="2" height="1" fill="#000000"/><rect x="1" y="8" width="1" height="1" fill="#000000"/><rect x="2" y="8" width="1" height="1" fill="#00ff00"/><rect x="3" y="8" width="2" height="1" fill="#ffffff"/><rect x="5" y="8" width="1" height="1" fill="#808080"/><rect x="6" y="8" width="2" height="1" fill="#ffffff"/><rect x="8" y="8" width="1" height="1" fill="#00ff00"/><rect x="9" y="8" width="1" height="1" fill="#000000"/><rect x="10" y="8" width="1" height="1" fill="#ffffff"/><rect x="11" y="8" width="2" height="1" fill="#c0c0c0"/><rect x="13" y="8" width="2" height="1" fill="#000000"/><rect x="1" y="9" width="1" height="1" fill="#000000"/><rect x="2" y="9" width="7" height="1" fill="#00ff00"/><rect x="9" y="9" width="1" height="1" fill="#000000"/><rect x="10" y="9" width="1" height="1" fill="#ffffff"/><rect x="11" y="9" width="2" height="1" fill="#c0c0c0"/><rect x="13" y="9" width="2" height="1" fill="#000000"/><rect x="1" y="10" width="14" height="1" fill="#000000"/><rect x="1" y="11" width="4" height="1" fill="#000080"/><rect x="5" y="11" width="1" height="1" fill="#ffffff"/><rect x="6" y="11" width="8" height="1" fill="#000080"/><rect x="14" y="11" width="1" height="1" fill="#000000"/><rect x="1" y="12" width="13" height="1" fill="#000080"/><rect x="14" y="12" width="1" height="1" fill="#000000"/><rect x="1" y="13" width="14" height="1" fill="#000000"/></svg><div class="t" style="left:78.00px;top:176px;font-size:13.5px;line-height:16px;font-weight:normal;color:#000;-webkit-text-stroke:0.25px #000;transform:scaleX(0.8348);transform-origin:0 0;">KU1.PCB</div><div class="a" style="left:46px;top:200px;width:11px;height:1px;background-image:linear-gradient(to right,#a0a0a0 50%,transparent 50%);background-size:2px 1px"></div><svg class="a" style="left:57px;top:192px;" width="16" height="16" viewBox="0 0 16 16" shape-rendering="crispEdges"><rect x="3" y="0" width="1" height="1" fill="#000000"/><rect x="5" y="0" width="6" height="1" fill="#808080"/><rect x="11" y="0" width="2" height="1" fill="#ffffff"/><rect x="13" y="0" width="1" height="1" fill="#000000"/><rect x="3" y="1" width="1" height="1" fill="#000000"/><rect x="5" y="1" width="6" height="1" fill="#808080"/><rect x="11" y="1" width="3" height="1" fill="#ffffff"/><rect x="14" y="1" width="1" height="1" fill="#000000"/><rect x="3" y="2" width="1" height="1" fill="#000000"/><rect x="5" y="2" width="6" height="1" fill="#808080"/><rect x="11" y="2" width="1" height="1" fill="#000000"/><rect x="12" y="2" width="2" height="1" fill="#ffffff"/><rect x="14" y="2" width="1" height="1" fill="#000000"/><rect x="1" y="3" width="9" height="1" fill="#000000"/><rect x="10" y="3" width="2" height="1" fill="#808080"/><rect x="12" y="3" width="2" height="1" fill="#000000"/><rect x="14" y="3" width="1" height="1" fill="#808080"/><rect x="1" y="4" width="2" height="1" fill="#f8c000"/><rect x="3" y="4" width="1" height="1" fill="#000000"/><rect x="4" y="4" width="5" height="1" fill="#f8c000"/><rect x="9" y="4" width="1" height="1" fill="#ffffff"/><rect x="10" y="4" width="5" height="1" fill="#808080"/><rect x="1" y="5" width="1" height="1" fill="#f8c000"/><rect x="2" y="5" width="1" height="1" fill="#000000"/><rect x="3" y="5" width="1" height="1" fill="#ffff00"/><rect x="4" y="5" width="1" height="1" fill="#000000"/><rect x="5" y="5" width="3" height="1" fill="#f8c000"/><rect x="8" y="5" width="1" height="1" fill="#ffffff"/><rect x="9" y="5" width="1" height="1" fill="#c0c0c0"/><rect x="10" y="5" width="5" height="1" fill="#808080"/><rect x="1" y="6" width="2" height="1" fill="#f8c000"/><rect x="3" y="6" width="1" height="1" fill="#000000"/><rect x="4" y="6" width="3" height="1" fill="#f8c000"/><rect x="7" y="6" width="1" height="1" fill="#000000"/><rect x="8" y="6" width="1" height="1" fill="#00ff00"/><rect x="9" y="6" width="1" height="1" fill="#f8c000"/><rect x="10" y="6" width="5" height="1" fill="#808080"/><rect x="1" y="7" width="2" height="1" fill="#f8c000"/><rect x="3" y="7" width="1" height="1" fill="#000000"/><rect x="4" y="7" width="2" height="1" fill="#f8c000"/><rect x="6" y="7" width="1" height="1" fill="#000000"/><rect x="7" y="7" width="2" height="1" fill="#00ff00"/><rect x="9" y="7" width="1" height="1" fill="#f8c000"/><rect x="10" y="7" width="5" height="1" fill="#808080"/><rect x="1" y="8" width="1" height="1" fill="#f8c000"/><rect x="2" y="8" width="1" height="1" fill="#3a6ea5"/><rect x="3" y="8" width="1" height="1" fill="#000000"/><rect x="4" y="8" width="2" height="1" fill="#f8c000"/><rect x="6" y="8" width="1" height="1" fill="#000000"/><rect x="7" y="8" width="3" height="1" fill="#f8c000"/><rect x="10" y="8" width="5" height="1" fill="#808080"/><rect x="1" y="9" width="1" height="1" fill="#f8c000"/><rect x="2" y="9" width="1" height="1" fill="#3a6ea5"/><rect x="3" y="9" width="2" height="1" fill="#f8c000"/><rect x="5" y="9" width="1" height="1" fill="#000000"/><rect x="6" y="9" width="1" height="1" fill="#3a6ea5"/><rect x="7" y="9" width="3" height="1" fill="#f8c000"/><rect x="10" y="9" width="5" height="1" fill="#808080"/><rect x="1" y="10" width="1" height="1" fill="#f8c000"/><rect x="2" y="10" width="1" height="1" fill="#3a6ea5"/><rect x="3" y="10" width="2" height="1" fill="#f8c000"/><rect x="5" y="10" width="1" height="1" fill="#000000"/><rect x="6" y="10" width="1" height="1" fill="#3a6ea5"/><rect x="7" y="10" width="3" height="1" fill="#f8c000"/><rect x="10" y="10" width="5" height="1" fill="#808080"/><rect x="1" y="11" width="5" height="1" fill="#f8c000"/><rect x="6" y="11" width="1" height="1" fill="#000000"/><rect x="7" y="11" width="3" height="1" fill="#f8c000"/><rect x="10" y="11" width="5" height="1" fill="#808080"/><rect x="1" y="12" width="6" height="1" fill="#f8c000"/><rect x="7" y="12" width="1" height="1" fill="#000000"/><rect x="8" y="12" width="2" height="1" fill="#f8c000"/><rect x="10" y="12" width="5" height="1" fill="#808080"/><rect x="1" y="13" width="7" height="1" fill="#f8c000"/><rect x="8" y="13" width="1" height="1" fill="#000000"/><rect x="9" y="13" width="1" height="1" fill="#f8c000"/><rect x="10" y="13" width="5" height="1" fill="#808080"/><rect x="8" y="14" width="1" height="1" fill="#000000"/></svg><div class="t" style="left:78.00px;top:192px;font-size:13.5px;line-height:16px;font-weight:normal;color:#000;-webkit-text-stroke:0.25px #000;transform:scaleX(0.8246);transform-origin:0 0;">KU1.Sch</div><div class="a" style="left:8px;top:216px;width:11px;height:1px;background-image:linear-gradient(to right,#a0a0a0 50%,transparent 50%);background-size:2px 1px"></div><div class="a" style="left:4px;top:212px;width:9px;height:9px;background:#fff;border:1px solid #aca899"></div><div class="a" style="left:6px;top:216px;width:5px;height:1px;background:#000"></div><div class="a" style="left:8px;top:214px;width:1px;height:5px;background:#000"></div><svg class="a" style="left:19px;top:208px;" width="16" height="16" viewBox="0 0 16 16" shape-rendering="crispEdges"><rect x="4" y="1" width="8" height="1" fill="#000000"/><rect x="3" y="2" width="1" height="1" fill="#000000"/><rect x="4" y="2" width="6" height="1" fill="#ffffff"/><rect x="10" y="2" width="2" height="1" fill="#ffff00"/><rect x="12" y="2" width="1" height="1" fill="#000000"/><rect x="2" y="3" width="1" height="1" fill="#000000"/><rect x="3" y="3" width="2" height="1" fill="#ffffff"/><rect x="5" y="3" width="5" height="1" fill="#c0c000"/><rect x="10" y="3" width="3" height="1" fill="#ffff00"/><rect x="13" y="3" width="1" height="1" fill="#000000"/><rect x="2" y="4" width="1" height="1" fill="#000000"/><rect x="3" y="4" width="2" height="1" fill="#c0c000"/><rect x="5" y="4" width="1" height="1" fill="#ffff00"/><rect x="6" y="4" width="2" height="1" fill="#c0c000"/><rect x="8" y="4" width="5" height="1" fill="#ffff00"/><rect x="13" y="4" width="1" height="1" fill="#000000"/><rect x="2" y="5" width="1" height="1" fill="#000000"/><rect x="3" y="5" width="1" height="1" fill="#ffff00"/><rect x="4" y="5" width="8" height="1" fill="#000000"/><rect x="12" y="5" width="1" height="1" fill="#ffff00"/><rect x="13" y="5" width="1" height="1" fill="#000000"/><rect x="2" y="6" width="1" height="1" fill="#000000"/><rect x="3" y="6" width="3" height="1" fill="#c0c000"/><rect x="6" y="6" width="1" height="1" fill="#ffff00"/><rect x="7" y="6" width="1" height="1" fill="#808000"/><rect x="8" y="6" width="5" height="1" fill="#ffff00"/><rect x="13" y="6" width="1" height="1" fill="#000000"/><rect x="2" y="7" width="1" height="1" fill="#000000"/><rect x="3" y="7" width="3" height="1" fill="#c0c000"/><rect x="6" y="7" width="1" height="1" fill="#808000"/><rect x="7" y="7" width="1" height="1" fill="#ffff00"/><rect x="8" y="7" width="1" height="1" fill="#808000"/><rect x="9" y="7" width="4" height="1" fill="#ffff00"/><rect x="13" y="7" width="1" height="1" fill="#000000"/><rect x="2" y="8" width="1" height="1" fill="#000000"/><rect x="3" y="8" width="3" height="1" fill="#c0c000"/><rect x="6" y="8" width="1" height="1" fill="#ffff00"/><rect x="7" y="8" width="1" height="1" fill="#808000"/><rect x="8" y="8" width="5" height="1" fill="#ffff00"/><rect x="13" y="8" width="1" height="1" fill="#000000"/><rect x="2" y="9" width="1" height="1" fill="#000000"/><rect x="3" y="9" width="3" height="1" fill="#c0c000"/><rect x="6" y="9" width="1" height="1" fill="#808000"/><rect x="7" y="9" width="1" height="1" fill="#ffff00"/><rect x="8" y="9" width="1" height="1" fill="#808000"/><rect x="9" y="9" width="4" height="1" fill="#ffff00"/><rect x="13" y="9" width="1" height="1" fill="#000000"/><rect x="2" y="10" width="1" height="1" fill="#000000"/><rect x="3" y="10" width="3" height="1" fill="#c0c000"/><rect x="6" y="10" width="1" height="1" fill="#ffff00"/><rect x="7" y="10" width="1" height="1" fill="#808000"/><rect x="8" y="10" width="5" height="1" fill="#ffff00"/><rect x="13" y="10" width="1" height="1" fill="#000000"/><rect x="2" y="11" width="1" height="1" fill="#000000"/><rect x="3" y="11" width="3" height="1" fill="#c0c000"/><rect x="6" y="11" width="1" height="1" fill="#808000"/><rect x="7" y="11" width="1" height="1" fill="#ffff00"/><rect x="8" y="11" width="1" height="1" fill="#808000"/><rect x="9" y="11" width="4" height="1" fill="#ffff00"/><rect x="13" y="11" width="1" height="1" fill="#000000"/><rect x="2" y="12" width="1" height="1" fill="#000000"/><rect x="3" y="12" width="3" height="1" fill="#c0c000"/><rect x="6" y="12" width="1" height="1" fill="#ffff00"/><rect x="7" y="12" width="1" height="1" fill="#808000"/><rect x="8" y="12" width="5" height="1" fill="#ffff00"/><rect x="13" y="12" width="1" height="1" fill="#000000"/><rect x="3" y="13" width="1" height="1" fill="#000000"/><rect x="4" y="13" width="2" height="1" fill="#c0c000"/><rect x="6" y="13" width="6" height="1" fill="#ffff00"/><rect x="12" y="13" width="1" height="1" fill="#000000"/><rect x="4" y="14" width="8" height="1" fill="#000000"/></svg><div class="t" style="left:40.00px;top:208px;font-size:13.5px;line-height:16px;font-weight:normal;color:#000;-webkit-text-stroke:0.25px #000;transform:scaleX(0.8301);transform-origin:0 0;">Miscellaneous Devices.ddb</div></div><div class="a" style="left:16px;top:681px;width:176px;height:17px;background:linear-gradient(#f3f1ec,#fefefe 60%,#f7f6f1)"></div><div class="sbtn" style="left:16px;top:682px;width:17px;height:15px;"><svg class="a" style="left:0;top:0" width="15" height="13"><path d="M9 3.5L5.5 7L9 10.5" stroke="#4d6185" stroke-width="2" fill="none"/></svg></div><div class="sbtn" style="left:33px;top:682px;width:123px;height:15px;background:linear-gradient(to bottom,#cfdcfc,#c4d4fc 50%,#b4ccfa);"></div><svg class="a" style="left:90px;top:686px" width="10" height="8"><path d="M1.5 1V7M3.5 1V7M5.5 1V7M7.5 1V7" stroke="#eef4fe" stroke-width="1"/><path d="M2.5 1V7M4.5 1V7M6.5 1V7M8.5 1V7" stroke="#8caae6" stroke-width="1"/></svg><div class="sbtn" style="left:175px;top:682px;width:17px;height:15px;"><svg class="a" style="left:0;top:0" width="15" height="13"><path d="M6 3.5L9.5 7L6 10.5" stroke="#4d6185" stroke-width="2" fill="none"/></svg></div><div class="sunk" style="left:205px;top:78px;width:811px;height:628px;"><div class="in"></div></div><div class="rais" style="left:207px;top:101px;width:807px;height:603px;"><div class="in"></div></div><div class="tab" style="left:209px;top:82px;width:48px;height:19px;"></div><div class="t" style="left:215.00px;top:84px;font-size:12px;line-height:16px;font-weight:normal;color:#000;-webkit-text-stroke:0.25px #000;transform:scaleX(0.8293);transform-origin:0 0;">KU.Ddb</div><div class="tab" style="left:257px;top:82px;width:59px;height:19px;border-left:none"></div><div class="t" style="left:263.00px;top:84px;font-size:12px;line-height:16px;font-weight:normal;color:#000;-webkit-text-stroke:0.25px #000;transform:scaleX(0.8545);transform-origin:0 0;">Documents</div><div class="tab" style="left:316px;top:82px;width:50px;height:19px;border-left:none"></div><div class="t" style="left:322.00px;top:84px;font-size:12px;line-height:16px;font-weight:normal;color:#000;-webkit-text-stroke:0.25px #000;transform:scaleX(0.8636);transform-origin:0 0;">KU1.Sch</div><div class="tab" style="left:366px;top:82px;width:49px;height:19px;border-left:none"></div><div class="t" style="left:372.00px;top:84px;font-size:12px;line-height:16px;font-weight:normal;color:#000;-webkit-text-stroke:0.25px #000;transform:scaleX(0.8684);transform-origin:0 0;">KU.Sch</div><div class="tab" style="left:415px;top:82px;width:52px;height:19px;border-left:none"></div><div class="t" style="left:420.00px;top:84px;font-size:12px;line-height:16px;font-weight:normal;color:#000;-webkit-text-stroke:0.25px #000;transform:scaleX(0.8367);transform-origin:0 0;">KU1.PCB</div><div class="tab" style="left:467px;top:80px;width:73px;height:22px"></div><div class="a" style="left:465px;top:82px;width:2px;height:20px;background:#ece9d8"></div><svg class="a" style="left:474px;top:82px;" width="16" height="16" viewBox="0 0 16 16" shape-rendering="crispEdges"><rect x="3" y="0" width="9" height="1" fill="#000000"/><rect x="3" y="1" width="1" height="1" fill="#000000"/><rect x="4" y="1" width="7" height="1" fill="#c0c0c0"/><rect x="11" y="1" width="1" height="1" fill="#ffffff"/><rect x="12" y="1" width="1" height="1" fill="#000000"/><rect x="3" y="2" width="1" height="1" fill="#000000"/><rect x="4" y="2" width="7" height="1" fill="#c0c0c0"/><rect x="11" y="2" width="2" height="1" fill="#ffffff"/><rect x="13" y="2" width="1" height="1" fill="#000000"/><rect x="2" y="3" width="1" height="1" fill="#808080"/><rect x="3" y="3" width="1" height="1" fill="#000000"/><rect x="4" y="3" width="7" height="1" fill="#c0c0c0"/><rect x="11" y="3" width="4" height="1" fill="#000000"/><rect x="1" y="4" width="2" height="1" fill="#808080"/><rect x="3" y="4" width="1" height="1" fill="#c0c0c0"/><rect x="4" y="4" width="2" height="1" fill="#808080"/><rect x="6" y="4" width="7" height="1" fill="#c0c0c0"/><rect x="13" y="4" width="1" height="1" fill="#ffff00"/><rect x="14" y="4" width="1" height="1" fill="#000000"/><rect x="1" y="5" width="1" height="1" fill="#0000ff"/><rect x="2" y="5" width="1" height="1" fill="#808080"/><rect x="3" y="5" width="2" height="1" fill="#c0c0c0"/><rect x="5" y="5" width="1" height="1" fill="#008000"/><rect x="6" y="5" width="7" height="1" fill="#c0c0c0"/><rect x="13" y="5" width="1" height="1" fill="#ffff00"/><rect x="14" y="5" width="1" height="1" fill="#000000"/><rect x="1" y="6" width="1" height="1" fill="#0000ff"/><rect x="2" y="6" width="1" height="1" fill="#808080"/><rect x="3" y="6" width="2" height="1" fill="#c0c0c0"/><rect x="5" y="6" width="1" height="1" fill="#008000"/><rect x="6" y="6" width="1" height="1" fill="#808080"/><rect x="7" y="6" width="6" height="1" fill="#c0c0c0"/><rect x="13" y="6" width="1" height="1" fill="#ffff00"/><rect x="14" y="6" width="1" height="1" fill="#000000"/><rect x="1" y="7" width="1" height="1" fill="#0000ff"/><rect x="2" y="7" width="1" height="1" fill="#808080"/><rect x="3" y="7" width="2" height="1" fill="#c0c0c0"/><rect x="5" y="7" width="1" height="1" fill="#008000"/><rect x="6" y="7" width="1" height="1" fill="#808080"/><rect x="7" y="7" width="6" height="1" fill="#c0c0c0"/><rect x="13" y="7" width="1" height="1" fill="#ffff00"/><rect x="14" y="7" width="1" height="1" fill="#000000"/><rect x="1" y="8" width="1" height="1" fill="#0000ff"/><rect x="2" y="8" width="1" height="1" fill="#808080"/><rect x="3" y="8" width="2" height="1" fill="#c0c0c0"/><rect x="5" y="8" width="1" height="1" fill="#008000"/><rect x="6" y="8" width="7" height="1" fill="#c0c0c0"/><rect x="13" y="8" width="1" height="1" fill="#ffff00"/><rect x="14" y="8" width="1" height="1" fill="#000000"/><rect x="1" y="9" width="1" height="1" fill="#0000ff"/><rect x="2" y="9" width="1" height="1" fill="#808080"/><rect x="3" y="9" width="2" height="1" fill="#c0c0c0"/><rect x="5" y="9" width="1" height="1" fill="#008000"/><rect x="6" y="9" width="7" height="1" fill="#c0c0c0"/><rect x="13" y="9" width="1" height="1" fill="#ffff00"/><rect x="14" y="9" width="1" height="1" fill="#000000"/><rect x="1" y="10" width="1" height="1" fill="#0000ff"/><rect x="2" y="10" width="1" height="1" fill="#808080"/><rect x="3" y="10" width="2" height="1" fill="#c0c0c0"/><rect x="5" y="10" width="1" height="1" fill="#008000"/><rect x="6" y="10" width="7" height="1" fill="#c0c0c0"/><rect x="13" y="10" width="1" height="1" fill="#ffff00"/><rect x="14" y="10" width="1" height="1" fill="#000000"/><rect x="1" y="11" width="1" height="1" fill="#0000ff"/><rect x="2" y="11" width="3" height="1" fill="#808080"/><rect x="5" y="11" width="1" height="1" fill="#008000"/><rect x="6" y="11" width="7" height="1" fill="#808080"/><rect x="13" y="11" width="1" height="1" fill="#ffff00"/><rect x="14" y="11" width="1" height="1" fill="#000000"/><rect x="1" y="12" width="4" height="1" fill="#000000"/><rect x="5" y="12" width="1" height="1" fill="#008000"/><rect x="6" y="12" width="9" height="1" fill="#000000"/><rect x="5" y="13" width="1" height="1" fill="#000000"/></svg><div class="t" style="left:496.00px;top:82px;font-size:12px;line-height:16px;font-weight:normal;color:#000;-webkit-text-stroke:0.25px #000;transform:scaleX(0.8182);transform-origin:0 0;">KU.NET</div><div class="sunk" style="left:211px;top:105px;width:799px;height:595px;"><div class="in"></div></div><div class="a" style="left:213px;top:107px;width:779px;height:591px;background:#ffffe8;overflow:hidden"><div class="code" style="left:16px;top:0"><span class="g">[</span>
D1
DIODE0.4
1N4002



<span class="g">]</span>
<span class="g">[</span>
D2
DIODE0.4
1N4002



<span class="g">]</span>
<span class="g">[</span>
D3
DIODE0.4
1N4002



<span class="g">]</span>
<span class="g">[</span>
D4
DIODE0.4
1N4002



<span class="g">]</span>
<span class="g">[</span>
R
AXIAL0.3
1K



<span class="g">]</span>
<span class="g">(</span>
NetD2_K
D2-K
R-1
<span class="g">)</span></div><div class="a" style="left:15px;top:0;width:2px;height:13px;background:#000"></div></div><div class="a" style="left:992px;top:107px;width:16px;height:591px;background:linear-gradient(to right,#f3f1ec,#fefefe 60%,#f7f6f1)"></div><div class="sbtn" style="left:993px;top:107px;width:15px;height:16px;"><svg class="a" style="left:0;top:0" width="13" height="14"><path d="M3.5 8.5L7 5L10.5 8.5" stroke="#4d6185" stroke-width="2" fill="none"/></svg></div><div class="sbtn" style="left:993px;top:124px;width:15px;height:380px;background:linear-gradient(to right,#cbd6fa,#c4d4fc 50%,#b0c8f8);"></div><svg class="a" style="left:996px;top:309px" width="9" height="9"><path d="M1 1.5H7M1 3.5H7M1 5.5H7M1 7.5H7" stroke="#eef4fe" stroke-width="1"/><path d="M2 2.5H8M2 4.5H8M2 6.5H8M2 8.5H8" stroke="#8caae6" stroke-width="1"/></svg><div class="sbtn" style="left:993px;top:681px;width:15px;height:16px;"><svg class="a" style="left:0;top:0" width="13" height="14"><path d="M3.5 6L7 9.5L10.5 6" stroke="#4d6185" stroke-width="2" fill="none"/></svg></div><svg class="a" style="left:14px;top:712px;" width="16" height="14" viewBox="0 0 16 14" shape-rendering="crispEdges"><rect x="8" y="0" width="1" height="1" fill="#ffffff"/><rect x="8" y="1" width="1" height="1" fill="#ffff00"/><rect x="9" y="1" width="1" height="1" fill="#ffffff"/><rect x="9" y="2" width="1" height="1" fill="#ffff00"/><rect x="10" y="2" width="1" height="1" fill="#ffffff"/><rect x="6" y="3" width="1" height="1" fill="#ffff00"/><rect x="7" y="3" width="1" height="1" fill="#ffffff"/><rect x="8" y="3" width="1" height="1" fill="#ffff00"/><rect x="9" y="3" width="1" height="1" fill="#ffffff"/><rect x="10" y="3" width="1" height="1" fill="#ffff00"/><rect x="11" y="3" width="1" height="1" fill="#ffffff"/><rect x="3" y="4" width="3" height="1" fill="#ffff00"/><rect x="6" y="4" width="1" height="1" fill="#ffffff"/><rect x="7" y="4" width="1" height="1" fill="#ffff00"/><rect x="8" y="4" width="1" height="1" fill="#ffffff"/><rect x="9" y="4" width="1" height="1" fill="#ffff00"/><rect x="10" y="4" width="1" height="1" fill="#ffffff"/><rect x="11" y="4" width="2" height="1" fill="#ffff00"/><rect x="1" y="5" width="2" height="1" fill="#ffff00"/><rect x="3" y="5" width="1" height="1" fill="#ffffff"/><rect x="4" y="5" width="1" height="1" fill="#ffff00"/><rect x="5" y="5" width="1" height="1" fill="#ffffff"/><rect x="6" y="5" width="6" height="1" fill="#ffff00"/><rect x="12" y="5" width="1" height="1" fill="#808000"/><rect x="1" y="6" width="4" height="1" fill="#ffff00"/><rect x="5" y="6" width="1" height="1" fill="#808000"/><rect x="6" y="6" width="1" height="1" fill="#ffffff"/><rect x="7" y="6" width="1" height="1" fill="#808000"/><rect x="8" y="6" width="1" height="1" fill="#ffff00"/><rect x="9" y="6" width="1" height="1" fill="#808000"/><rect x="10" y="6" width="2" height="1" fill="#ffff00"/><rect x="12" y="6" width="1" height="1" fill="#808000"/><rect x="0" y="7" width="2" height="1" fill="#ffff00"/><rect x="2" y="7" width="1" height="1" fill="#808000"/><rect x="3" y="7" width="1" height="1" fill="#ffff00"/><rect x="4" y="7" width="1" height="1" fill="#808000"/><rect x="5" y="7" width="1" height="1" fill="#ffff00"/><rect x="6" y="7" width="1" height="1" fill="#808000"/><rect x="7" y="7" width="1" height="1" fill="#ffff00"/><rect x="8" y="7" width="1" height="1" fill="#808000"/><rect x="9" y="7" width="1" height="1" fill="#ffff00"/><rect x="10" y="7" width="2" height="1" fill="#808000"/><rect x="0" y="8" width="2" height="1" fill="#ffff00"/><rect x="2" y="8" width="9" height="1" fill="#808000"/><rect x="0" y="9" width="3" height="1" fill="#808000"/><rect x="8" y="9" width="2" height="1" fill="#808000"/><rect x="0" y="10" width="2" height="1" fill="#808000"/><rect x="8" y="10" width="1" height="1" fill="#808000"/><rect x="0" y="11" width="1" height="1" fill="#808000"/><rect x="0" y="12" width="1" height="1" fill="#808000"/><rect x="0" y="13" width="1" height="1" fill="#808000"/></svg><div class="t" style="left:34.00px;top:713px;font-size:12px;line-height:16px;font-weight:normal;color:#000;-webkit-text-stroke:0.25px #000;transform:scaleX(0.7826);transform-origin:0 0;">Ln:1</div><div class="t" style="left:65.00px;top:713px;font-size:12px;line-height:16px;font-weight:normal;color:#000;-webkit-text-stroke:0.25px #000;transform:scaleX(0.8788);transform-origin:0 0;">, Col:1</div><svg class="a" style="left:187px;top:712px;" width="16" height="14" viewBox="0 0 16 14" shape-rendering="crispEdges"><rect x="8" y="0" width="1" height="1" fill="#ffffff"/><rect x="8" y="1" width="1" height="1" fill="#d8d8d8"/><rect x="9" y="1" width="1" height="1" fill="#ffffff"/><rect x="9" y="2" width="1" height="1" fill="#d8d8d8"/><rect x="10" y="2" width="1" height="1" fill="#ffffff"/><rect x="6" y="3" width="1" height="1" fill="#d8d8d8"/><rect x="7" y="3" width="1" height="1" fill="#ffffff"/><rect x="8" y="3" width="1" height="1" fill="#d8d8d8"/><rect x="9" y="3" width="1" height="1" fill="#ffffff"/><rect x="10" y="3" width="1" height="1" fill="#d8d8d8"/><rect x="11" y="3" width="1" height="1" fill="#ffffff"/><rect x="3" y="4" width="3" height="1" fill="#d8d8d8"/><rect x="6" y="4" width="1" height="1" fill="#ffffff"/><rect x="7" y="4" width="1" height="1" fill="#d8d8d8"/><rect x="8" y="4" width="1" height="1" fill="#ffffff"/><rect x="9" y="4" width="1" height="1" fill="#d8d8d8"/><rect x="10" y="4" width="1" height="1" fill="#ffffff"/><rect x="11" y="4" width="2" height="1" fill="#d8d8d8"/><rect x="1" y="5" width="2" height="1" fill="#d8d8d8"/><rect x="3" y="5" width="1" height="1" fill="#ffffff"/><rect x="4" y="5" width="1" height="1" fill="#d8d8d8"/><rect x="5" y="5" width="1" height="1" fill="#ffffff"/><rect x="6" y="5" width="6" height="1" fill="#d8d8d8"/><rect x="12" y="5" width="1" height="1" fill="#a0a0a0"/><rect x="1" y="6" width="4" height="1" fill="#d8d8d8"/><rect x="5" y="6" width="1" height="1" fill="#a0a0a0"/><rect x="6" y="6" width="1" height="1" fill="#ffffff"/><rect x="7" y="6" width="1" height="1" fill="#a0a0a0"/><rect x="8" y="6" width="1" height="1" fill="#d8d8d8"/><rect x="9" y="6" width="1" height="1" fill="#a0a0a0"/><rect x="10" y="6" width="2" height="1" fill="#d8d8d8"/><rect x="12" y="6" width="1" height="1" fill="#a0a0a0"/><rect x="0" y="7" width="2" height="1" fill="#d8d8d8"/><rect x="2" y="7" width="1" height="1" fill="#a0a0a0"/><rect x="3" y="7" width="1" height="1" fill="#d8d8d8"/><rect x="4" y="7" width="1" height="1" fill="#a0a0a0"/><rect x="5" y="7" width="1" height="1" fill="#d8d8d8"/><rect x="6" y="7" width="1" height="1" fill="#a0a0a0"/><rect x="7" y="7" width="1" height="1" fill="#d8d8d8"/><rect x="8" y="7" width="1" height="1" fill="#a0a0a0"/><rect x="9" y="7" width="1" height="1" fill="#d8d8d8"/><rect x="10" y="7" width="2" height="1" fill="#a0a0a0"/><rect x="0" y="8" width="2" height="1" fill="#d8d8d8"/><rect x="2" y="8" width="9" height="1" fill="#a0a0a0"/><rect x="0" y="9" width="3" height="1" fill="#a0a0a0"/><rect x="8" y="9" width="2" height="1" fill="#a0a0a0"/><rect x="0" y="10" width="2" height="1" fill="#a0a0a0"/><rect x="8" y="10" width="1" height="1" fill="#a0a0a0"/><rect x="0" y="11" width="1" height="1" fill="#a0a0a0"/><rect x="0" y="12" width="1" height="1" fill="#a0a0a0"/><rect x="0" y="13" width="1" height="1" fill="#a0a0a0"/></svg><svg class="a" style="left:567px;top:712px;" width="16" height="14" viewBox="0 0 16 14" shape-rendering="crispEdges"><rect x="8" y="0" width="1" height="1" fill="#ffffff"/><rect x="8" y="1" width="1" height="1" fill="#ffff00"/><rect x="9" y="1" width="1" height="1" fill="#ffffff"/><rect x="9" y="2" width="1" height="1" fill="#ffff00"/><rect x="10" y="2" width="1" height="1" fill="#ffffff"/><rect x="6" y="3" width="1" height="1" fill="#ffff00"/><rect x="7" y="3" width="1" height="1" fill="#ffffff"/><rect x="8" y="3" width="1" height="1" fill="#ffff00"/><rect x="9" y="3" width="1" height="1" fill="#ffffff"/><rect x="10" y="3" width="1" height="1" fill="#ffff00"/><rect x="11" y="3" width="1" height="1" fill="#ffffff"/><rect x="3" y="4" width="3" height="1" fill="#ffff00"/><rect x="6" y="4" width="1" height="1" fill="#ffffff"/><rect x="7" y="4" width="1" height="1" fill="#ffff00"/><rect x="8" y="4" width="1" height="1" fill="#ffffff"/><rect x="9" y="4" width="1" height="1" fill="#ffff00"/><rect x="10" y="4" width="1" height="1" fill="#ffffff"/><rect x="11" y="4" width="2" height="1" fill="#ffff00"/><rect x="1" y="5" width="2" height="1" fill="#ffff00"/><rect x="3" y="5" width="1" height="1" fill="#ffffff"/><rect x="4" y="5" width="1" height="1" fill="#ffff00"/><rect x="5" y="5" width="1" height="1" fill="#ffffff"/><rect x="6" y="5" width="6" height="1" fill="#ffff00"/><rect x="12" y="5" width="1" height="1" fill="#808000"/><rect x="1" y="6" width="4" height="1" fill="#ffff00"/><rect x="5" y="6" width="1" height="1" fill="#808000"/><rect x="6" y="6" width="1" height="1" fill="#ffffff"/><rect x="7" y="6" width="1" height="1" fill="#808000"/><rect x="8" y="6" width="1" height="1" fill="#ffff00"/><rect x="9" y="6" width="1" height="1" fill="#808000"/><rect x="10" y="6" width="2" height="1" fill="#ffff00"/><rect x="12" y="6" width="1" height="1" fill="#808000"/><rect x="0" y="7" width="2" height="1" fill="#ffff00"/><rect x="2" y="7" width="1" height="1" fill="#808000"/><rect x="3" y="7" width="1" height="1" fill="#ffff00"/><rect x="4" y="7" width="1" height="1" fill="#808000"/><rect x="5" y="7" width="1" height="1" fill="#ffff00"/><rect x="6" y="7" width="1" height="1" fill="#808000"/><rect x="7" y="7" width="1" height="1" fill="#ffff00"/><rect x="8" y="7" width="1" height="1" fill="#808000"/><rect x="9" y="7" width="1" height="1" fill="#ffff00"/><rect x="10" y="7" width="2" height="1" fill="#808000"/><rect x="0" y="8" width="2" height="1" fill="#ffff00"/><rect x="2" y="8" width="9" height="1" fill="#808000"/><rect x="0" y="9" width="3" height="1" fill="#808000"/><rect x="8" y="9" width="2" height="1" fill="#808000"/><rect x="0" y="10" width="2" height="1" fill="#808000"/><rect x="8" y="10" width="1" height="1" fill="#808000"/><rect x="0" y="11" width="1" height="1" fill="#808000"/><rect x="0" y="12" width="1" height="1" fill="#808000"/><rect x="0" y="13" width="1" height="1" fill="#808000"/></svg><div class="t" style="left:587.00px;top:713px;font-size:12px;line-height:16px;font-weight:normal;color:#000;-webkit-text-stroke:0.25px #000;transform:scaleX(0.8214);transform-origin:0 0;">Insert</div><svg class="a" style="left:1000px;top:714px;" width="15" height="15" viewBox="0 0 15 15" shape-rendering="crispEdges"><rect x="0" y="0" width="14" height="1" fill="#000000"/><rect x="0" y="1" width="1" height="1" fill="#000000"/><rect x="1" y="1" width="1" height="1" fill="#ffff00"/><rect x="2" y="1" width="1" height="1" fill="#ffffff"/><rect x="3" y="1" width="1" height="1" fill="#ffff00"/><rect x="4" y="1" width="1" height="1" fill="#ffffff"/><rect x="5" y="1" width="1" height="1" fill="#ffff00"/><rect x="6" y="1" width="1" height="1" fill="#ffffff"/><rect x="7" y="1" width="1" height="1" fill="#ffff00"/><rect x="8" y="1" width="1" height="1" fill="#ffffff"/><rect x="9" y="1" width="1" height="1" fill="#ffff00"/><rect x="10" y="1" width="1" height="1" fill="#ffffff"/><rect x="11" y="1" width="1" height="1" fill="#ffff00"/><rect x="12" y="1" width="1" height="1" fill="#ffffff"/><rect x="13" y="1" width="1" height="1" fill="#000000"/><rect x="0" y="2" width="1" height="1" fill="#000000"/><rect x="1" y="2" width="1" height="1" fill="#ffffff"/><rect x="2" y="2" width="1" height="1" fill="#ffff00"/><rect x="3" y="2" width="1" height="1" fill="#ffffff"/><rect x="4" y="2" width="5" height="1" fill="#000080"/><rect x="9" y="2" width="1" height="1" fill="#ffffff"/><rect x="10" y="2" width="1" height="1" fill="#ffff00"/><rect x="11" y="2" width="1" height="1" fill="#ffffff"/><rect x="12" y="2" width="1" height="1" fill="#ffff00"/><rect x="13" y="2" width="1" height="1" fill="#000000"/><rect x="0" y="3" width="1" height="1" fill="#000000"/><rect x="1" y="3" width="1" height="1" fill="#ffff00"/><rect x="2" y="3" width="1" height="1" fill="#ffffff"/><rect x="3" y="3" width="2" height="1" fill="#000080"/><rect x="5" y="3" width="1" height="1" fill="#ffff00"/><rect x="6" y="3" width="1" height="1" fill="#ffffff"/><rect x="7" y="3" width="1" height="1" fill="#ffff00"/><rect x="8" y="3" width="2" height="1" fill="#000080"/><rect x="10" y="3" width="1" height="1" fill="#ffffff"/><rect x="11" y="3" width="1" height="1" fill="#ffff00"/><rect x="12" y="3" width="1" height="1" fill="#ffffff"/><rect x="13" y="3" width="1" height="1" fill="#000000"/><rect x="0" y="4" width="1" height="1" fill="#000000"/><rect x="1" y="4" width="1" height="1" fill="#ffffff"/><rect x="2" y="4" width="1" height="1" fill="#ffff00"/><rect x="3" y="4" width="1" height="1" fill="#ffffff"/><rect x="4" y="4" width="1" height="1" fill="#ffff00"/><rect x="5" y="4" width="1" height="1" fill="#ffffff"/><rect x="6" y="4" width="1" height="1" fill="#ffff00"/><rect x="7" y="4" width="1" height="1" fill="#ffffff"/><rect x="8" y="4" width="2" height="1" fill="#000080"/><rect x="10" y="4" width="1" height="1" fill="#ffff00"/><rect x="11" y="4" width="1" height="1" fill="#ffffff"/><rect x="12" y="4" width="1" height="1" fill="#ffff00"/><rect x="13" y="4" width="1" height="1" fill="#000000"/><rect x="0" y="5" width="1" height="1" fill="#000000"/><rect x="1" y="5" width="1" height="1" fill="#ffff00"/><rect x="2" y="5" width="1" height="1" fill="#ffffff"/><rect x="3" y="5" width="1" height="1" fill="#ffff00"/><rect x="4" y="5" width="1" height="1" fill="#ffffff"/><rect x="5" y="5" width="1" height="1" fill="#ffff00"/><rect x="6" y="5" width="1" height="1" fill="#ffffff"/><rect x="7" y="5" width="2" height="1" fill="#000080"/><rect x="9" y="5" width="1" height="1" fill="#ffff00"/><rect x="10" y="5" width="1" height="1" fill="#ffffff"/><rect x="11" y="5" width="1" height="1" fill="#ffff00"/><rect x="12" y="5" width="1" height="1" fill="#ffffff"/><rect x="13" y="5" width="1" height="1" fill="#000000"/><rect x="0" y="6" width="1" height="1" fill="#000000"/><rect x="1" y="6" width="1" height="1" fill="#ffffff"/><rect x="2" y="6" width="1" height="1" fill="#ffff00"/><rect x="3" y="6" width="1" height="1" fill="#ffffff"/><rect x="4" y="6" width="1" height="1" fill="#ffff00"/><rect x="5" y="6" width="1" height="1" fill="#ffffff"/><rect x="6" y="6" width="2" height="1" fill="#000080"/><rect x="8" y="6" width="1" height="1" fill="#ffff00"/><rect x="9" y="6" width="1" height="1" fill="#ffffff"/><rect x="10" y="6" width="1" height="1" fill="#ffff00"/><rect x="11" y="6" width="1" height="1" fill="#ffffff"/><rect x="12" y="6" width="1" height="1" fill="#ffff00"/><rect x="13" y="6" width="1" height="1" fill="#000000"/><rect x="0" y="7" width="1" height="1" fill="#000000"/><rect x="1" y="7" width="1" height="1" fill="#ffff00"/><rect x="2" y="7" width="1" height="1" fill="#ffffff"/><rect x="3" y="7" width="1" height="1" fill="#ffff00"/><rect x="4" y="7" width="1" height="1" fill="#ffffff"/><rect x="5" y="7" width="1" height="1" fill="#ffff00"/><rect x="6" y="7" width="2" height="1" fill="#000080"/><rect x="8" y="7" width="1" height="1" fill="#ffffff"/><rect x="9" y="7" width="1" height="1" fill="#ffff00"/><rect x="10" y="7" width="1" height="1" fill="#ffffff"/><rect x="11" y="7" width="1" height="1" fill="#ffff00"/><rect x="12" y="7" width="1" height="1" fill="#ffffff"/><rect x="13" y="7" width="1" height="1" fill="#000000"/><rect x="0" y="8" width="1" height="1" fill="#000000"/><rect x="1" y="8" width="1" height="1" fill="#ffffff"/><rect x="2" y="8" width="1" height="1" fill="#ffff00"/><rect x="3" y="8" width="1" height="1" fill="#ffffff"/><rect x="4" y="8" width="1" height="1" fill="#ffff00"/><rect x="5" y="8" width="1" height="1" fill="#ffffff"/><rect x="6" y="8" width="1" height="1" fill="#ffff00"/><rect x="7" y="8" width="1" height="1" fill="#ffffff"/><rect x="8" y="8" width="1" height="1" fill="#ffff00"/><rect x="9" y="8" width="1" height="1" fill="#ffffff"/><rect x="10" y="8" width="1" height="1" fill="#ffff00"/><rect x="11" y="8" width="1" height="1" fill="#ffffff"/><rect x="12" y="8" width="1" height="1" fill="#ffff00"/><rect x="13" y="8" width="1" height="1" fill="#000000"/><rect x="0" y="9" width="1" height="1" fill="#000000"/><rect x="1" y="9" width="1" height="1" fill="#ffff00"/><rect x="2" y="9" width="1" height="1" fill="#ffffff"/><rect x="3" y="9" width="1" height="1" fill="#ffff00"/><rect x="4" y="9" width="1" height="1" fill="#ffffff"/><rect x="5" y="9" width="1" height="1" fill="#ffff00"/><rect x="6" y="9" width="2" height="1" fill="#000080"/><rect x="8" y="9" width="1" height="1" fill="#ffffff"/><rect x="9" y="9" width="1" height="1" fill="#ffff00"/><rect x="10" y="9" width="1" height="1" fill="#ffffff"/><rect x="11" y="9" width="1" height="1" fill="#ffff00"/><rect x="12" y="9" width="1" height="1" fill="#ffffff"/><rect x="13" y="9" width="1" height="1" fill="#000000"/><rect x="0" y="10" width="1" height="1" fill="#000000"/><rect x="1" y="10" width="1" height="1" fill="#ffffff"/><rect x="2" y="10" width="1" height="1" fill="#ffff00"/><rect x="3" y="10" width="1" height="1" fill="#ffffff"/><rect x="4" y="10" width="1" height="1" fill="#ffff00"/><rect x="5" y="10" width="1" height="1" fill="#ffffff"/><rect x="6" y="10" width="1" height="1" fill="#ffff00"/><rect x="7" y="10" width="1" height="1" fill="#ffffff"/><rect x="8" y="10" width="1" height="1" fill="#ffff00"/><rect x="9" y="10" width="1" height="1" fill="#ffffff"/><rect x="10" y="10" width="1" height="1" fill="#ffff00"/><rect x="11" y="10" width="1" height="1" fill="#ffffff"/><rect x="12" y="10" width="1" height="1" fill="#ffff00"/><rect x="13" y="10" width="1" height="1" fill="#000000"/><rect x="0" y="11" width="8" height="1" fill="#000000"/><rect x="8" y="11" width="1" height="1" fill="#ffffff"/><rect x="9" y="11" width="5" height="1" fill="#000000"/><rect x="8" y="12" width="1" height="1" fill="#000000"/><rect x="9" y="12" width="1" height="1" fill="#ffffff"/><rect x="10" y="12" width="1" height="1" fill="#000000"/><rect x="9" y="13" width="2" height="1" fill="#000000"/><rect x="10" y="14" width="1" height="1" fill="#000000"/></svg></body></html>
